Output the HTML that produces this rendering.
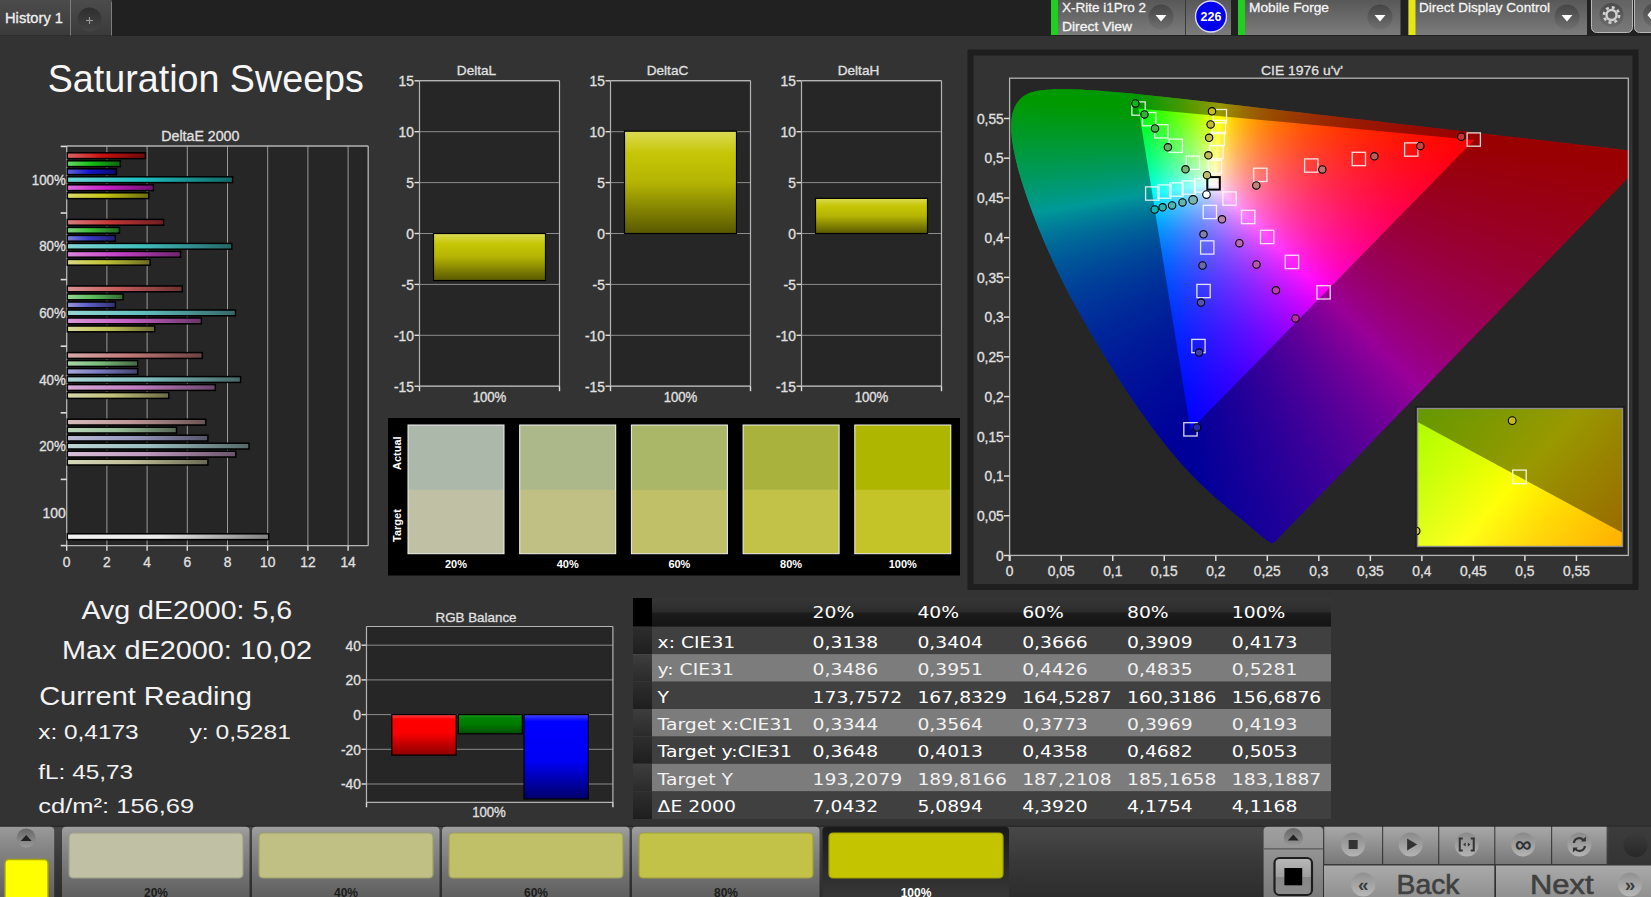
<!DOCTYPE html>
<html><head><meta charset="utf-8"><title>Saturation Sweeps</title>
<style>
html,body{margin:0;padding:0;background:#333;overflow:hidden}
#pg{position:relative;width:1651px;height:897px;background:#333;overflow:hidden;font-family:"Liberation Sans",sans-serif}
#cie{position:absolute;left:1010px;top:79px;width:618px;height:476px;overflow:hidden}
#cie i{display:block;height:2px}
#ins{position:absolute;left:1418px;top:409px;width:204px;height:137px;overflow:hidden}
#ins i{display:block;height:3px}
#ov{position:absolute;left:0;top:0}
text{font-family:"Liberation Sans",sans-serif}
text.tb{font-family:"DejaVu Sans","Liberation Sans",sans-serif}
</style></head><body><div id="pg">
<div id="cie">
<i></i>
<i></i>
<i></i>
<i></i>
<i></i>
<i style="background:linear-gradient(90deg,#0f0 3.9%,#0f0 15.5%)"></i>
<i style="background:linear-gradient(90deg,#0f0 2.8%,#0f0 19.1%)"></i>
<i style="background:linear-gradient(90deg,#0f0 2.1%,#0f0 20.4%,#1cff00 22.3%)"></i>
<i style="background:linear-gradient(90deg,#0f0 1.6%,#0f0 20.4%,#1eff00 22.5%,#4dff00 25.4%)"></i>
<i style="background:linear-gradient(90deg,#00ff01 1.3%,#0f0 20.6%,#3fff00 24.6%,#81ff00 28.3%)"></i>
<i style="background:linear-gradient(90deg,#00ff05 1%,#0f0 6.1%,#0f0 20.6%,#2aff00 23.3%,#57ff00 26.1%,#87ff00 28.6%,#bcff00 31.2%)"></i>
<i style="background:linear-gradient(90deg,#00ff08 0.6%,#0f0 9.5%,#0f0 20.6%,#3f0 23.9%,#72ff00 27.5%,#b5ff00 30.9%,#faff00 34%)"></i>
<i style="background:linear-gradient(90deg,#00ff0c 0.5%,#0f0 12.9%,#01ff00 20.7%,#3bff00 24.4%,#7f0 27.8%,#b9ff00 31.1%,#ff0 34.1%,#ffe200 35.4%,#ffc700 36.9%)"></i>
<i style="background:linear-gradient(90deg,#00ff0f 0.3%,#0f0 16.3%,#0f0 20.7%,#38ff00 24.3%,#74ff00 27.7%,#b5ff00 30.9%,#fffe00 34.1%,#ffe100 35.4%,#ffc900 36.7%,#ffb200 38.2%,#ff9f00 39.6%)"></i>
<i style="background:linear-gradient(90deg,#00ff13 0.2%,#0f0 20.7%,#35ff00 24.1%,#74ff00 27.7%,#b2ff00 30.7%,#fffd00 34.1%,#ffda00 35.8%,#ffb900 37.7%,#ff9a00 40%,#ff8100 42.4%)"></i>
<i style="background:linear-gradient(90deg,#00ff16 0.2%,#01ff03 20.9%,#39ff00 24.4%,#7f0 27.8%,#b9ff00 31.1%,#fdff00 34%,#fffd00 34.1%,#ffe300 35.3%,#ffcd00 36.4%,#ffa800 38.8%,#ff8600 41.7%,#ff6800 45.3%)"></i>
<i style="background:linear-gradient(90deg,#00ff1a 0%,#00ff08 20.9%,#39ff03 24.4%,#7f0 27.8%,#baff00 31.1%,#feff00 34%,#ffdf00 35.4%,#ffc700 36.7%,#ffb000 38.2%,#ff9a00 39.8%,#ff8700 41.6%,#ff7500 43.5%,#f50 48.1%)"></i>
<i style="background:linear-gradient(90deg,#00ff1d 0%,#00ff0c 20.9%,#33ff09 24.1%,#73ff04 27.7%,#b6ff00 30.9%,#ff0 34%,#ffde00 35.4%,#ffc300 36.9%,#ffa800 38.7%,#ff9000 40.6%,#ff7b00 42.7%,#ff6800 45.1%,#f50 47.9%,#ff4600 50.8%)"></i>
<i style="background:linear-gradient(90deg,#00ff21 0%,#01ff11 21%,#3bff0d 24.6%,#76ff09 27.8%,#b7ff04 30.9%,#fffe00 34%,#ffda00 35.6%,#ffba00 37.4%,#ff9f00 39.3%,#ff8500 41.6%,#ff6e00 44.2%,#ff5b00 46.9%,#ff4800 50.2%,#ff3900 53.7%)"></i>
<i style="background:linear-gradient(90deg,#00ff24 0%,#00ff16 21%,#3aff12 24.6%,#76ff0e 27.8%,#b7ff0a 30.9%,#fcff06 33.8%,#fffe05 34%,#ffd302 35.9%,#ffb500 37.7%,#ff9600 40%,#ff7d00 42.4%,#ff6500 45.3%,#ff5000 48.5%,#ff3e00 52.3%,#ff2e00 56.5%)"></i>
<i style="background:linear-gradient(90deg,#00ff28 0%,#00ff1a 21%,#34ff17 24.3%,#73ff14 27.7%,#b7ff10 30.9%,#fdff0c 33.8%,#fffd0b 34%,#ffd207 35.9%,#ffaf03 38%,#ff9000 40.5%,#ff7500 43.2%,#ff5c00 46.4%,#ff4700 50.2%,#ff3500 54.4%,#ff2500 59.2%)"></i>
<i style="background:linear-gradient(90deg,#00ff2b 0%,#01ff1f 21.2%,#39ff1c 24.6%,#76ff19 27.8%,#b7ff15 30.9%,#feff12 33.8%,#ffd10c 35.9%,#ffac08 38.2%,#ff8a03 40.9%,#ff6d00 44%,#f50 47.6%,#ff3f00 51.8%,#ff2c00 56.6%,#ff1c00 62.1%)"></i>
<i style="background:linear-gradient(90deg,#00ff2f 0%,#00ff24 21.2%,#39ff21 24.6%,#76ff1e 27.8%,#b8ff1b 30.9%,#ffff18 33.8%,#ffe414 35%,#ffcd11 36.1%,#ffa60b 38.5%,#ff8407 41.4%,#ff6703 44.7%,#ff4e00 48.5%,#ff3800 53.2%,#ff2600 58.6%,#ff1500 64.9%)"></i>
<i style="background:linear-gradient(90deg,#0f3 0%,#00ff29 21.2%,#35ff27 24.4%,#76ff24 27.8%,#b8ff21 30.9%,#ffff1e 33.8%,#ffe41a 35%,#ffcd16 36.1%,#ffb613 37.4%,#ffa310 38.7%,#ff800a 41.7%,#ff6105 45.5%,#ff4801 49.7%,#ff3200 54.7%,#ff1f00 60.7%,#ff0f00 67.6%)"></i>
<i style="background:linear-gradient(90deg,#00ff36 0%,#01ff2e 21.4%,#3aff2c 24.8%,#75ff2a 27.8%,#b4ff27 30.7%,#fffe24 33.8%,#ffe320 35%,#ffc91b 36.2%,#ffb317 37.5%,#ff9e13 39%,#ff8b10 40.6%,#ff7a0d 42.2%,#ff5c07 46.1%,#ff4103 50.8%,#ff2b00 56.3%,#ff1900 62.8%,#ff0a00 70.6%)"></i>
<i style="background:linear-gradient(90deg,#00ff3a 0%,#0f3 21.4%,#3aff31 24.8%,#75ff2f 27.8%,#b1ff2d 30.6%,#fdff2b 33.7%,#fffd2b 33.8%,#ffe225 35%,#ffc820 36.2%,#ffaf1b 37.7%,#ff9b17 39.2%,#ff8813 40.8%,#ff7610 42.6%,#ff570a 46.8%,#ff3c04 51.8%,#ff2700 57.6%,#ff1400 64.7%,#ff0500 73.3%)"></i>
<i style="background:linear-gradient(90deg,#00ff3e 0%,#00ff38 21.4%,#34ff37 24.4%,#72ff35 27.7%,#adff34 30.4%,#fdff32 33.7%,#fffc31 33.8%,#ffe12b 35%,#ffc725 36.2%,#ffaf20 37.7%,#ff981b 39.3%,#ff8417 41.1%,#ff7113 43%,#ff520c 47.4%,#ff3706 52.8%,#ff2101 59.2%,#ff0f00 67%,#f00 76.2%)"></i>
<i style="background:linear-gradient(90deg,#00ff42 0%,#01ff3d 21.5%,#39ff3c 24.8%,#71ff3b 27.7%,#b5ff3a 30.7%,#feff38 33.7%,#fffb38 33.8%,#ffdd30 35.1%,#ffc32a 36.4%,#ffa924 38%,#ff931f 39.6%,#ff801a 41.4%,#ff6c15 43.5%,#ff5c11 45.8%,#ff4c0d 48.4%,#ff3007 54.4%,#ff1a02 61.8%,#ff0400 73%,#f00 76.1%,#f00 79%)"></i>
<i style="background:linear-gradient(90deg,#00ff45 0%,#00ff42 21.5%,#3bff42 24.9%,#78ff41 28%,#b9ff40 30.9%,#ffff3f 33.7%,#ffdf37 35%,#ffc22f 36.4%,#ffa829 38%,#ff9122 39.8%,#ff7c1d 41.7%,#ff6918 43.9%,#ff5814 46.3%,#ff4810 48.9%,#ff390c 52.1%,#ff2b08 55.7%,#ff1402 64.1%,#f00 75.7%,#f00 81.7%)"></i>
<i style="background:linear-gradient(90deg,#00ff49 0%,#00ff48 21.5%,#35ff47 24.6%,#74ff47 27.8%,#b6ff46 30.7%,#fffe46 33.7%,#ffdb3c 35.1%,#ffbf34 36.6%,#ffa52d 38.2%,#ff8c26 40.1%,#ff7620 42.2%,#ff631a 44.5%,#ff5215 47.1%,#ff4311 49.8%,#ff330d 53.4%,#ff2509 57.4%,#ff0d02 67.2%,#f00 75.4%,#f00 84.6%)"></i>
<i style="background:linear-gradient(90deg,#00ff4d 0%,#01ff4d 21.7%,#3aff4d 24.9%,#74ff4d 27.8%,#b2ff4d 30.6%,#fcff4d 33.5%,#fffd4c 33.7%,#ffda42 35.1%,#ffbe39 36.6%,#ffa231 38.3%,#ff8929 40.3%,#ff7423 42.4%,#ff601d 44.8%,#ff4e18 47.6%,#ff3f13 50.5%,#ff2f0e 54.4%,#ff200a 58.9%,#ff1306 63.9%,#ff0802 69.7%,#f00 75.1%,#f00 87.4%)"></i>
<i style="background:linear-gradient(90deg,#00ff51 0%,#00ff52 21.7%,#3aff53 24.9%,#74ff53 27.8%,#aeff53 30.4%,#fdff54 33.5%,#fffc53 33.7%,#ffd948 35.1%,#ffba3e 36.7%,#ff9e35 38.5%,#ff862d 40.5%,#ff7026 42.7%,#ff5c1f 45.3%,#ff4b1a 48.1%,#ff3a14 51.3%,#ff290f 55.7%,#ff1b0a 60.5%,#ff0e06 66.2%,#ff0303 72.7%,#ff0002 74.9%,#f00 90.1%)"></i>
<i style="background:linear-gradient(90deg,#0f5 0%,#00ff58 21.7%,#33ff59 24.6%,#70ff59 27.7%,#abff5a 30.3%,#d3ff5b 31.9%,#feff5b 33.5%,#fffc5a 33.7%,#ffd84e 35.1%,#ffb943 36.7%,#ff9b39 38.7%,#ff8230 40.8%,#ff6b28 43.2%,#ff5821 45.8%,#ff461b 48.7%,#ff3716 51.9%,#ff2610 56.5%,#ff180b 61.7%,#ff0b07 67.6%,#ff0003 74.4%,#f00 82%,#f00 93%)"></i>
<i style="background:linear-gradient(90deg,#00ff59 0%,#01ff5e 21.8%,#3cff5f 25.1%,#77ff60 28%,#bbff61 30.9%,#ffff62 33.5%,#ffd754 35.1%,#ffb848 36.7%,#ff9a3d 38.7%,#ff8134 40.8%,#ff6a2c 43.2%,#ff5624 46%,#ff441e 49%,#ff3418 52.4%,#ff2412 56.8%,#ff170d 61.8%,#ff0b09 67.5%,#ff0005 74.1%,#f00 85.4%,#f00 95.8%)"></i>
<i style="background:linear-gradient(90deg,#00ff5d 0.2%,#00ff63 21.8%,#3bff65 25.1%,#7f6 28%,#b7ff68 30.7%,#fffe69 33.5%,#ffda5b 35%,#ffb74e 36.7%,#ff9a42 38.7%,#ff7f38 40.9%,#ff682f 43.4%,#ff5327 46.3%,#ff4120 49.5%,#ff3119 53.1%,#ff2214 57.3%,#ff150f 62.1%,#ff0006 73.8%,#f00 88.8%,#f00 98.7%)"></i>
<i style="background:linear-gradient(90deg,#00ff61 0.2%,#00ff69 21.8%,#34ff6b 24.8%,#73ff6d 27.8%,#b3ff6f 30.6%,#fffe70 33.5%,#ffd961 35%,#ffb653 36.7%,#ff9947 38.7%,#ff7e3c 40.9%,#ff6632 43.5%,#ff5129 46.4%,#ff3f22 49.7%,#ff2f1b 53.4%,#ff2116 57.4%,#ff1511 62.1%,#ff0008 73.5%,#f00 92.2%,#f00 100%)"></i>
<i style="background:linear-gradient(90deg,#00ff65 0.2%,#00ff6f 21.8%,#0aff6f 22.5%,#30ff71 24.6%,#6fff73 27.7%,#abff75 30.3%,#d5ff77 31.9%,#fdff79 33.3%,#fffd78 33.5%,#ffd868 35%,#ffb559 36.7%,#ff984c 38.7%,#ff7d40 40.9%,#ff6536 43.5%,#ff502d 46.4%,#ff3e25 49.7%,#ff2e1e 53.4%,#ff2118 57.4%,#ff1413 62.1%,#ff000a 73.1%,#ff0002 88.8%,#f00 100%)"></i>
<i style="background:linear-gradient(90deg,#00ff69 0.3%,#00ff75 22%,#39ff77 25.1%,#73ff7a 27.8%,#acff7d 30.3%,#d5ff7e 31.9%,#feff80 33.3%,#fffc7f 33.5%,#ffd76e 35%,#ffb45e 36.7%,#ff9751 38.7%,#ff7c44 40.9%,#ff6439 43.5%,#ff5030 46.4%,#ff3e28 49.7%,#ff2e20 53.4%,#ff201a 57.4%,#ff1415 62%,#ff000c 72.8%,#f00 100%)"></i>
<i style="background:linear-gradient(90deg,#00ff6d 0.3%,#00ff7b 22%,#32ff7d 24.8%,#6fff81 27.7%,#b4ff84 30.6%,#feff88 33.3%,#fffb86 33.5%,#ffd674 35%,#ffb364 36.7%,#ff9655 38.7%,#ff7b49 40.9%,#ff633d 43.5%,#ff4f33 46.4%,#ff3d2b 49.7%,#ff2d23 53.4%,#ff1417 61.8%,#ff000d 72.5%,#ff0001 100%)"></i>
<i style="background:linear-gradient(90deg,#00ff71 0.5%,#00ff81 22%,#0aff82 22.7%,#32ff84 24.8%,#72ff88 27.8%,#b4ff8c 30.6%,#ffff90 33.3%,#ffd97d 34.8%,#ffb56b 36.6%,#ff975b 38.5%,#ff7c4e 40.8%,#ff6442 43.4%,#ff4f37 46.3%,#ff3d2e 49.5%,#ff2d26 53.2%,#ff201f 57.1%,#ff1419 61.7%,#ff000f 72.2%,#ff0002 100%)"></i>
<i style="background:linear-gradient(90deg,#00ff76 0.5%,#00ff7e 12.3%,#01ff87 22.2%,#3bff8b 25.2%,#76ff8f 28%,#b4ff93 30.6%,#fffe97 33.3%,#ffd883 34.8%,#ffb470 36.6%,#ff9660 38.5%,#ff7b52 40.8%,#ff6345 43.4%,#ff4e3a 46.3%,#ff3c31 49.5%,#ff2c28 53.2%,#ff141b 61.5%,#f01 71.8%,#ff0009 84.3%,#ff0003 100%)"></i>
<i style="background:linear-gradient(90deg,#00ff7a 0.6%,#00ff83 12.3%,#00ff8d 22.2%,#37ff91 25.1%,#72ff96 27.8%,#b1ff9a 30.4%,#fcffa0 33.2%,#fffd9f 33.3%,#ffd78a 34.8%,#ffb376 36.6%,#ff9565 38.5%,#ff7a56 40.8%,#ff6249 43.4%,#ff4d3e 46.3%,#ff3c34 49.5%,#ff2c2b 53.2%,#ff131d 61.3%,#ff0013 71.5%,#ff000a 84.1%,#ff0004 100%)"></i>
<i style="background:linear-gradient(90deg,#00ff7e 0.6%,#0f8 12.5%,#00ff94 22.2%,#0aff95 22.8%,#30ff98 24.8%,#6eff9d 27.7%,#a8ffa1 30.1%,#d3ffa5 31.7%,#fdffa8 33.2%,#fffca7 33.3%,#ffd691 34.8%,#ffb27c 36.6%,#ff946a 38.5%,#ff795b 40.8%,#ff634e 43.2%,#ff4e41 46.1%,#ff3c37 49.4%,#ff2c2e 53.1%,#ff1320 61.2%,#ff0014 71.4%,#ff000c 84%,#ff0005 100%)"></i>
<i style="background:linear-gradient(90deg,#00ff83 0.8%,#00ff8e 12.6%,#01ff9a 22.3%,#39ff9f 25.2%,#71ffa4 27.8%,#b5ffaa 30.6%,#feffb1 33.2%,#fffbae 33.3%,#ffd597 34.8%,#ffb182 36.6%,#ff9370 38.5%,#ff785f 40.8%,#ff6252 43.2%,#ff4d45 46.1%,#ff3b3a 49.4%,#ff2b30 53.1%,#ff1322 61%,#ff0016 71%,#ff000d 83.8%,#ff0006 100%)"></i>
<i style="background:linear-gradient(90deg,#00ff87 0.8%,#00ff93 12.6%,#00ffa1 22.3%,#38ffa6 25.2%,#75ffac 28%,#b6ffb2 30.6%,#ffffb9 33.2%,#ffd8a1 34.6%,#ffb389 36.4%,#ff9576 38.3%,#ff7965 40.6%,#ff6256 43%,#ff4d49 46%,#ff3b3d 49.2%,#ff2b33 52.9%,#ff1324 60.8%,#ff0018 70.7%,#ff000e 83.7%,#ff0007 100%)"></i>
<i style="background:linear-gradient(90deg,#00ff8c 1%,#00ff98 12.6%,#00ffa8 22.3%,#31ffad 24.9%,#71ffb3 27.8%,#b1ffba 30.4%,#fffec1 33.2%,#ffd7a8 34.6%,#ffb28f 36.4%,#ff947b 38.3%,#ff7a6a 40.5%,#ff635b 42.9%,#ff4d4d 45.8%,#ff3a40 49.2%,#ff2a36 52.9%,#ff1326 60.7%,#ff001a 70.4%,#ff0010 83.5%,#ff0008 100%)"></i>
<i style="background:linear-gradient(90deg,#00ff90 1%,#00ff9e 12.8%,#01ffaf 22.5%,#3affb5 25.4%,#74ffbb 28%,#b2ffc2 30.4%,#fcffca 33%,#fffdc9 33.2%,#ffd6af 34.6%,#ffb195 36.4%,#ff9380 38.3%,#ff796f 40.5%,#ff625f 42.9%,#ff4c50 45.8%,#ff3943 49.2%,#ff2938 52.9%,#ff1229 60.5%,#ff001c 70.1%,#f01 83.2%,#ff0009 100%)"></i>
<i style="background:linear-gradient(90deg,#00ff95 1.1%,#00ffa4 12.8%,#00ffb5 22.5%,#36ffbc 25.2%,#74ffc3 28%,#aeffca 30.3%,#fdffd3 33%,#fffcd1 33.2%,#ffd5b6 34.6%,#ffb09c 36.4%,#ff9286 38.3%,#ff7873 40.5%,#ff6163 42.9%,#ff4c54 45.8%,#ff3946 49.2%,#ff293b 52.9%,#ff122b 60.4%,#ff001e 69.7%,#ff0013 83%,#ff000a 100%)"></i>
<i style="background:linear-gradient(90deg,#0f9 1.1%,#00ffa9 12.8%,#00ffbc 22.5%,#2fffc2 24.9%,#70ffca 27.8%,#b7ffd3 30.6%,#feffdc 33%,#fffbda 33.2%,#ffd4bd 34.6%,#ffafa2 36.4%,#ff918b 38.3%,#ff7778 40.5%,#ff6067 42.9%,#ff4b57 45.8%,#ff3849 49.2%,#ff283e 52.9%,#ff122d 60.4%,#ff0020 69.4%,#ff0014 82.8%,#ff000b 100%)"></i>
<i style="background:linear-gradient(90deg,#00ff9e 1.3%,#00ffaf 12.9%,#01ffc4 22.7%,#3cffcc 25.6%,#78ffd4 28.2%,#b7ffdc 30.6%,#ffffe6 33%,#ffd7c7 34.5%,#ffb1aa 36.2%,#ff9292 38.2%,#ff787e 40.3%,#ff606c 42.7%,#ff4b5c 45.6%,#ff394e 48.9%,#ff2841 52.6%,#ff1230 59.9%,#f02 69.1%,#ff0016 82.5%,#ff000c 100%)"></i>
<i style="background:linear-gradient(90deg,#00ffa3 1.5%,#00ffb5 13.1%,#00ffcb 22.7%,#38ffd3 25.4%,#78ffdc 28.2%,#b7ffe5 30.6%,#fffeee 33%,#ffd6ce 34.5%,#ffb0b0 36.2%,#ff9198 38.2%,#ff7783 40.3%,#ff6070 42.7%,#ff4a5f 45.6%,#ff3851 48.9%,#ff2844 52.6%,#ff1232 59.9%,#ff0024 68.8%,#ff0017 82.4%,#ff000d 100%)"></i>
<i style="background:linear-gradient(90deg,#00ffa8 1.5%,#0fb 13.1%,#00ffd2 22.7%,#34ffda 25.2%,#73ffe3 28%,#b3ffed 30.4%,#fbfff8 32.8%,#fffdf7 33%,#ffd5d6 34.5%,#ffafb7 36.2%,#ff909d 38.2%,#ff7688 40.3%,#ff5f74 42.7%,#ff4963 45.6%,#ff3754 48.9%,#ff2747 52.6%,#ff1135 59.7%,#ff0026 68.4%,#ff0019 82%,#ff000e 99.8%)"></i>
<i style="background:linear-gradient(90deg,#00ffad 1.6%,#00ffc1 13.3%,#01ffda 22.8%,#33ffe2 25.2%,#6bffeb 27.7%,#a6fff4 29.9%,#e8fffe 32.2%,#fefcff 33%,#fff7fc 33.2%,#ffd0da 34.6%,#ffabbb 36.4%,#ff8da1 38.3%,#ff738b 40.5%,#ff5c77 42.9%,#ff4765 45.8%,#ff3656 49%,#ff2649 52.8%,#ff1137 59.7%,#ff0029 68.1%,#ff001a 81.7%,#ff000f 99.5%)"></i>
<i style="background:linear-gradient(90deg,#00ffb2 1.6%,#00ffc7 13.3%,#00ffe1 22.8%,#28ffe8 24.8%,#53ffef 26.7%,#83fff7 28.6%,#b3ffff 30.4%,#fef1ff 33.3%,#ffedfc 33.5%,#ffc7db 35%,#ffa4bc 36.7%,#ff87a2 38.7%,#ff6f8d 40.8%,#ff5979 43.2%,#ff4567 46.1%,#ff3257 49.5%,#ff234a 53.2%,#ff1039 59.9%,#ff002b 67.8%,#ff001c 81.6%,#ff0010 99.4%)"></i>
<i style="background:linear-gradient(90deg,#00ffb7 1.8%,#00ffcd 13.3%,#00ffe9 22.8%,#12ffec 23.8%,#39fff3 25.6%,#7fffff 28.5%,#fee6ff 33.7%,#ffe2fc 33.8%,#ffbfdc 35.3%,#ff9ebd 37.1%,#ff82a4 39%,#ff698d 41.3%,#ff547a 43.7%,#ff4168 46.6%,#ff3059 49.8%,#ff214c 53.6%,#ff0f3b 59.9%,#ff002d 67.5%,#ff001d 81.2%,#f01 99%)"></i>
<i style="background:linear-gradient(90deg,#00ffbc 1.9%,#00ffd4 13.4%,#01fff1 23%,#26fff8 24.8%,#4effff 26.5%,#a4eeff 30.3%,#fedcff 34%,#ffd9fc 34.1%,#ffb7dc 35.6%,#ff98be 37.4%,#ff7da5 39.3%,#ff658f 41.6%,#ff507a 44.2%,#ff3d69 47.1%,#ff2d5a 50.3%,#ff1f4d 54%,#ff0e3d 60%,#ff002f 67.2%,#ff001f 80.7%,#ff0012 98.7%)"></i>
<i style="background:linear-gradient(90deg,#00ffc1 1.9%,#00ffda 13.4%,#00ffe9 18.4%,#00fff9 23%,#2ff 24.6%,#90e9ff 29.6%,#fed3ff 34.3%,#ffd0fc 34.5%,#ffadda 36.1%,#ff8fbd 37.9%,#ff76a5 39.8%,#ff608f 42.1%,#ff4b7b 44.7%,#ff3a6a 47.6%,#ff2a5b 50.8%,#ff1d4e 54.5%,#ff0d3e 60.2%,#ff0032 66.8%,#ff0021 80.4%,#ff0014 98.4%)"></i>
<i style="background:linear-gradient(90deg,#00ffc6 2.1%,#00ffdf 12.8%,#0fe 17.8%,#0ff 22.5%,#00fdff 23%,#23f6ff 24.8%,#68e8ff 28%,#b3d9ff 31.4%,#fecaff 34.6%,#ffc7fc 34.8%,#ffa6db 36.4%,#ff8abf 38.2%,#ff72a6 40.1%,#ff5c90 42.4%,#ff487d 45%,#ff376b 47.9%,#ff285c 51.3%,#ff1b4f 55%,#ff0c40 60.4%,#ff0034 66.5%,#f02 80.1%,#ff0015 98.1%)"></i>
<i style="background:linear-gradient(90deg,#0fc 2.3%,#00ffe3 12.1%,#0ff 20.6%,#01f5ff 23.1%,#6edfff 28.5%,#b5d0ff 31.7%,#fec1ff 35%,#ffbefc 35.1%,#ff9fdc 36.7%,#ff84c0 38.5%,#ff6da8 40.5%,#ff5892 42.7%,#ff457e 45.3%,#ff356d 48.2%,#ff265d 51.6%,#ff1950 55.3%,#ff0b42 60.5%,#ff0036 66.3%,#ff0024 79.9%,#ff0016 97.7%)"></i>
<i style="background:linear-gradient(90deg,#00ffd1 2.3%,#00ffe6 11%,#0ff 18.6%,#0ef 23.1%,#6ed7ff 28.6%,#b6c8ff 32%,#feb9ff 35.3%,#ffb6fc 35.4%,#ff99dc 37.1%,#ff7fc1 38.8%,#ff67a7 40.9%,#ff5392 43.2%,#ff417f 45.8%,#ff326e 48.7%,#ff235e 52.1%,#ff1751 55.8%,#ff0b44 60.5%,#ff0039 66%,#ff0026 79.6%,#ff0017 97.4%)"></i>
<i style="background:linear-gradient(90deg,#00ffd7 2.4%,#00ffe9 10%,#0ff 16.7%,#00e7ff 23.1%,#67d1ff 28.5%,#b1c1ff 32%,#feb1ff 35.6%,#ffaffc 35.8%,#ff92dd 37.4%,#ff7ac2 39.2%,#ff63a9 41.3%,#ff5093 43.5%,#ff3f80 46.1%,#ff2e6f 49.2%,#ff215f 52.6%,#ff1552 56.3%,#ff003b 65.7%,#ff0027 79.3%,#ff0018 97.1%)"></i>
<i style="background:linear-gradient(90deg,#00ffdc 2.6%,#00ffed 9.1%,#0ff 14.7%,#01dfff 23.3%,#6ec8ff 29%,#b6b9ff 32.5%,#feaaff 35.9%,#ffa7fc 36.1%,#ff8fe0 37.5%,#ff77c5 39.3%,#ff64af 41.1%,#ff519a 43.2%,#ff4288 45.5%,#ff3378 48.1%,#ff1b5c 54%,#ff0c4c 59.2%,#ff003e 65.4%,#ff0029 79%,#ff001a 96.8%)"></i>
<i style="background:linear-gradient(90deg,#00ffe2 2.8%,#0ff 12.9%,#00d9ff 23.3%,#70c1ff 29.3%,#b7b2ff 32.8%,#fea3ff 36.2%,#ffa0fc 36.4%,#ff89e1 37.9%,#ff74c8 39.5%,#ff61b2 41.3%,#ff4f9d 43.4%,#ff408b 45.6%,#ff317a 48.2%,#ff256b 51.1%,#ff1a5e 54.2%,#ff0c4e 59.2%,#ff0040 65%,#ff002b 78.5%,#ff001b 96.4%)"></i>
<i style="background:linear-gradient(90deg,#00ffe8 2.8%,#0ff 11%,#00d3ff 23.3%,#6abcff 29.1%,#b2acff 32.8%,#fe9cff 36.6%,#ff99fd 36.7%,#ff83e2 38.2%,#ff6dc7 40%,#ff5cb2 41.7%,#ff4b9d 43.9%,#ff3c8b 46.1%,#ff2e7b 48.7%,#ff1860 54.5%,#ff0b50 59.2%,#ff0043 64.7%,#ff0037 71%,#ff002d 78.2%,#ff001c 96.1%)"></i>
<i style="background:linear-gradient(90deg,#00ffed 2.9%,#0ff 9.1%,#01ccff 23.5%,#70b4ff 29.6%,#b7a5ff 33.3%,#fe95ff 36.9%,#ff93fd 37.1%,#ff7ee2 38.5%,#ff69c8 40.3%,#ff58b3 42.1%,#ff479e 44.2%,#ff398d 46.4%,#ff2c7c 49%,#ff1661 54.9%,#ff0a52 59.4%,#ff0045 64.4%,#ff0039 70.7%,#ff002f 77.8%,#ff001e 95.8%)"></i>
<i style="background:linear-gradient(90deg,#00fff3 3.1%,#0ff 7.1%,#00c7ff 23.5%,#70aeff 29.8%,#b59fff 33.5%,#fe8fff 37.2%,#ff8dfd 37.4%,#ff78e3 38.8%,#ff64c9 40.6%,#ff54b4 42.4%,#ff44a0 44.5%,#ff368e 46.8%,#ff2a7e 49.4%,#ff1562 55.2%,#ff0954 59.4%,#ff0048 64.1%,#ff003b 70.4%,#ff0031 77.5%,#ff001f 95.5%)"></i>
<i style="background:linear-gradient(90deg,#00fff9 3.1%,#0ff 5.2%,#00e1ff 14.6%,#00c1ff 23.5%,#6ca9ff 29.8%,#b499ff 33.7%,#fe89ff 37.5%,#ff87fd 37.7%,#ff73e3 39.2%,#ff60ca 40.9%,#ff50b5 42.7%,#ff41a1 44.8%,#ff348f 47.1%,#ff2880 49.5%,#ff1364 55.3%,#ff0957 59.2%,#ff004b 63.8%,#ff003e 70.1%,#f03 77.2%,#ff0020 95.1%)"></i>
<i style="background:linear-gradient(90deg,#0ff 3.2%,#00deff 13.6%,#00bcff 23.5%,#1cb6ff 25.2%,#66a5ff 29.6%,#b294ff 33.8%,#fe83ff 37.9%,#ff81fd 38%,#ff6ee4 39.5%,#ff5ccb 41.3%,#ff4db6 43%,#ff3ea2 45.1%,#ff3191 47.4%,#ff2681 49.8%,#ff1266 55.7%,#ff004e 63.4%,#ff0040 69.6%,#ff0034 76.9%,#f02 94.8%)"></i>
<i style="background:linear-gradient(90deg,#00f9ff 3.4%,#00d8ff 13.8%,#00b7ff 23.6%,#729dff 30.4%,#b68dff 34.3%,#fe7dff 38.2%,#ff7bfd 38.3%,#ff68e2 40%,#ff58cb 41.6%,#ff49b7 43.4%,#ff3ba3 45.5%,#ff2f92 47.7%,#ff2483 50.2%,#ff1067 56%,#ff0050 63.1%,#ff003e 71.5%,#ff002f 81.9%,#ff0023 94.5%)"></i>
<i style="background:linear-gradient(90deg,#00f3ff 3.6%,#00d3ff 13.9%,#00b2ff 23.6%,#6e98ff 30.4%,#b588ff 34.5%,#fe78ff 38.5%,#ff76fd 38.7%,#ff63e2 40.3%,#ff54cc 41.9%,#ff46b8 43.7%,#ff38a4 45.8%,#ff2c93 48.1%,#ff2284 50.5%,#ff0f69 56.1%,#ff0053 62.8%,#ff0040 71.5%,#ff0031 81.7%,#ff0024 94.2%)"></i>
<i style="background:linear-gradient(90deg,#00edff 3.7%,#00ceff 13.9%,#00adff 23.6%,#22a5ff 25.9%,#6995ff 30.3%,#b384ff 34.6%,#fe72ff 38.8%,#ff71fd 39%,#ff5fe3 40.6%,#ff50cd 42.2%,#ff43b9 44%,#ff36a6 46.1%,#ff2a94 48.4%,#ff2085 50.8%,#ff0d6a 56.5%,#ff0056 62.5%,#ff0041 71.7%,#ff0032 81.7%,#ff0026 94%)"></i>
<i style="background:linear-gradient(90deg,#00e8ff 3.7%,#00c8ff 14.1%,#00a8ff 23.8%,#738dff 31.1%,#b77eff 35.1%,#fe6dff 39.2%,#ff6cfd 39.3%,#ff5be3 40.9%,#ff4dce 42.6%,#ff40ba 44.3%,#ff33a7 46.4%,#ff2895 48.7%,#ff1e86 51.1%,#ff0c6b 56.8%,#ff0059 62.1%,#ff0043 71.8%,#ff0034 81.7%,#ff0027 93.7%)"></i>
<i style="background:linear-gradient(90deg,#00e2ff 3.9%,#00c4ff 14.1%,#00a4ff 23.8%,#7089ff 31.1%,#b679ff 35.3%,#fe68ff 39.5%,#ff67fd 39.6%,#ff57e4 41.3%,#ff49ce 42.9%,#ff3dbb 44.7%,#ff30a8 46.8%,#ff1c87 51.5%,#ff0b6d 57%,#ff005c 61.8%,#ff0045 71.8%,#ff0035 81.6%,#ff0028 93.4%)"></i>
<i style="background:linear-gradient(90deg,#0df 4%,#00a0ff 23.8%,#2597ff 26.4%,#6b86ff 30.9%,#b475ff 35.4%,#fe64ff 39.8%,#ff62fd 40%,#ff53e4 41.6%,#ff46cf 43.2%,#ff3abc 45%,#ff2ea9 47.1%,#ff1a89 51.8%,#ff096e 57.3%,#ff0060 61.5%,#ff0052 66.5%,#ff0046 72%,#ff0037 81.6%,#ff002a 93%)"></i>
<i style="background:linear-gradient(90deg,#00d8ff 4.2%,#009bff 23.9%,#7280ff 31.6%,#b870ff 35.9%,#fe5fff 40.1%,#ff5efd 40.3%,#ff4fe4 41.9%,#ff42d0 43.5%,#ff37bd 45.3%,#ff2baa 47.4%,#ff188b 51.9%,#ff0870 57.4%,#ff0063 61.2%,#ff0054 66.2%,#ff0048 72%,#ff0038 81.4%,#ff002b 92.7%)"></i>
<i style="background:linear-gradient(90deg,#00d4ff 4.2%,#0097ff 23.9%,#727cff 31.7%,#b76cff 36.1%,#fe5bff 40.5%,#ff59fd 40.6%,#ff4be5 42.2%,#ff3fd0 43.9%,#ff34bd 45.6%,#ff29ab 47.7%,#ff168c 52.3%,#ff0771 57.8%,#f06 60.8%,#ff0057 66%,#ff0049 72%,#ff003a 81.2%,#ff002d 92.4%)"></i>
<i style="background:linear-gradient(90deg,#00cfff 4.4%,#0093ff 23.9%,#2889ff 26.9%,#6d79ff 31.6%,#b568ff 36.2%,#fe56ff 40.8%,#ff55fd 40.9%,#ff47e5 42.6%,#ff3cd1 44.2%,#ff31be 46%,#ff27ad 47.9%,#ff158e 52.4%,#ff0673 57.9%,#ff0069 60.5%,#ff0059 65.9%,#ff004b 72%,#ff003b 81.2%,#ff002e 92.1%)"></i>
<i style="background:linear-gradient(90deg,#00caff 4.5%,#008fff 24.1%,#7473ff 32.2%,#b963ff 36.7%,#fe52ff 41.1%,#ff51fd 41.3%,#ff44e6 42.9%,#ff39d2 44.5%,#ff2ebf 46.3%,#ff24ad 48.4%,#ff138e 52.9%,#ff0474 58.3%,#ff006c 60.4%,#ff005b 65.9%,#ff004c 72.2%,#ff003d 81.1%,#ff0030 91.7%)"></i>
<i style="background:linear-gradient(90deg,#00c6ff 4.7%,#008cff 24.1%,#7170ff 32.2%,#b75fff 36.9%,#fe4eff 41.4%,#ff4dfd 41.6%,#ff40e6 43.2%,#ff36d2 44.8%,#ff22af 48.5%,#ff1190 53.1%,#ff0376 58.4%,#ff0070 59.9%,#ff0060 64.7%,#ff004e 72.2%,#ff003f 80.9%,#ff0031 91.4%)"></i>
<i style="background:linear-gradient(90deg,#00c1ff 4.9%,#08f 24.1%,#2b7eff 27.3%,#6f6dff 32.2%,#b65cff 37.1%,#fe4aff 41.7%,#ff49fd 41.9%,#ff3de6 43.5%,#ff33d3 45.1%,#ff20b0 48.9%,#ff1091 53.4%,#ff0278 58.6%,#ff0073 59.7%,#ff0062 64.9%,#ff0050 72.2%,#ff0040 80.9%,#f03 91.1%)"></i>
<i style="background:linear-gradient(90deg,#00bdff 5%,#0184ff 24.3%,#7568ff 32.8%,#fe47ff 42.1%,#ff46fd 42.2%,#ff3ae7 43.9%,#ff30d3 45.5%,#ff1eb1 49.2%,#ff0e92 53.7%,#ff0179 58.9%,#ff0063 65%,#ff0051 72.3%,#ff0042 80.7%,#ff0034 90.8%)"></i>
<i style="background:linear-gradient(90deg,#00b9ff 5%,#0081ff 24.3%,#7365ff 32.8%,#b854ff 37.7%,#fe43ff 42.4%,#ff42fd 42.6%,#ff37e7 44.2%,#ff2dd4 45.8%,#ff1cb1 49.5%,#ff0d94 53.9%,#ff007b 59.1%,#ff0065 65.2%,#ff0053 72.3%,#ff0043 80.7%,#ff0036 90.5%)"></i>
<i style="background:linear-gradient(90deg,#00b5ff 5.2%,#007eff 24.3%,#2d73ff 27.8%,#7062ff 32.8%,#ff3ffe 42.9%,#ff34e7 44.5%,#ff2ad5 46.1%,#ff19b2 49.8%,#ff0b95 54.2%,#ff007c 59.2%,#ff0067 65.2%,#f05 72.2%,#ff0045 80.4%,#ff0037 90.1%)"></i>
<i style="background:linear-gradient(90deg,#00b1ff 5.3%,#017bff 24.4%,#755eff 33.3%,#ff3bfe 43.2%,#ff31e8 44.8%,#ff28d5 46.4%,#ff17b3 50.2%,#ff0996 54.5%,#ff0083 58.3%,#ff007d 59.5%,#ff0068 65.4%,#ff0056 72.3%,#ff0046 80.4%,#ff0039 89.8%)"></i>
<i style="background:linear-gradient(90deg,#00adff 5.5%,#0078ff 24.4%,#745bff 33.5%,#ff38fe 43.5%,#ff26d7 46.6%,#ff16b5 50.3%,#ff0898 54.7%,#ff0087 57.9%,#ff007f 59.7%,#ff006a 65.5%,#ff0058 72.3%,#ff0048 80.3%,#ff003b 89.5%)"></i>
<i style="background:linear-gradient(90deg,#0af 5.7%,#0075ff 24.4%,#7059ff 33.3%,#ff35fe 43.9%,#ff23d8 46.9%,#ff14b6 50.6%,#ff0a9f 53.9%,#ff008b 57.6%,#ff0081 59.9%,#ff006b 65.7%,#ff0059 72.3%,#ff004a 80.1%,#ff003c 89.2%)"></i>
<i style="background:linear-gradient(90deg,#00a6ff 5.8%,#0172ff 24.6%,#7654ff 34%,#ff31fe 44.2%,#ff21d8 47.2%,#ff12b7 51%,#ff09a2 53.9%,#ff008f 57.3%,#ff0082 60%,#ff006d 65.7%,#ff005b 72.3%,#ff004c 79.9%,#ff003e 88.8%)"></i>
<i style="background:linear-gradient(90deg,#00a2ff 6%,#006fff 24.6%,#7651ff 34.1%,#ff2efe 44.5%,#ff1ed9 47.6%,#ff10b7 51.3%,#ff08a4 54%,#ff0093 57%,#ff0083 60.4%,#ff006e 66%,#ff005c 72.5%,#ff004d 79.9%,#ff003f 88.7%)"></i>
<i style="background:linear-gradient(90deg,#009fff 6.1%,#006cff 24.6%,#7150ff 34%,#ff2bfe 44.8%,#ff1cd9 47.9%,#ff0eb8 51.6%,#ff0098 56.6%,#ff0085 60.5%,#ff0070 66%,#ff005e 72.5%,#ff004f 79.8%,#ff0041 88.3%)"></i>
<i style="background:linear-gradient(90deg,#009bff 6.3%,#0169ff 24.8%,#774bff 34.6%,#ff29fe 45.1%,#ff1ada 48.2%,#ff0dba 51.8%,#ff009b 56.5%,#ff0087 60.7%,#ff0072 66.2%,#ff0060 72.5%,#ff0050 79.8%,#ff0043 88%)"></i>
<i style="background:linear-gradient(90deg,#09f 6.3%,#0067ff 24.8%,#7749ff 34.8%,#ff26fe 45.5%,#ff17da 48.5%,#ff0bbb 52.1%,#ff00a0 56.1%,#f08 60.8%,#ff0074 66.2%,#ff0062 72.5%,#ff0052 79.6%,#ff0045 87.7%)"></i>
<i style="background:linear-gradient(90deg,#0095ff 6.5%,#0065ff 24.8%,#7347ff 34.6%,#ff23fe 45.8%,#ff15db 48.9%,#ff09bc 52.4%,#ff00a5 55.8%,#ff008a 61%,#ff0075 66.3%,#ff0064 72.3%,#ff0054 79.3%,#ff0046 87.4%)"></i>
<i style="background:linear-gradient(90deg,#0092ff 6.6%,#0162ff 24.9%,#7644ff 35.1%,#ff20fe 46.1%,#ff13db 49.2%,#ff08bd 52.6%,#ff00a9 55.5%,#ff008b 61.2%,#f07 66.3%,#ff0065 72.3%,#ff0056 79.1%,#ff0048 87.1%)"></i>
<i style="background:linear-gradient(90deg,#008fff 6.8%,#005fff 24.9%,#7641ff 35.3%,#ff1efe 46.4%,#ff11db 49.5%,#ff06be 52.9%,#ff00ae 55.2%,#ff009d 58.1%,#ff008d 61.3%,#ff0079 66.5%,#ff0067 72.3%,#ff0057 79.1%,#ff004a 86.7%)"></i>
<i style="background:linear-gradient(90deg,#008cff 7%,#005dff 24.9%,#743fff 35.3%,#ff1bfe 46.8%,#ff0fdc 49.8%,#ff04bf 53.2%,#ff00b3 54.9%,#ff00a0 57.9%,#ff008f 61.5%,#ff007b 66.5%,#ff0069 72.3%,#ff0059 79%,#ff004c 86.4%)"></i>
<i style="background:linear-gradient(90deg,#0089ff 7.1%,#015bff 25.1%,#773cff 35.8%,#ff19fe 47.1%,#ff0dde 50%,#ff03c1 53.4%,#ff00b8 54.5%,#ff00a7 57.3%,#ff0090 61.7%,#ff007c 66.7%,#ff006b 72.3%,#ff005b 78.8%,#ff004e 86.1%)"></i>
<i style="background:linear-gradient(90deg,#0086ff 7.3%,#0059ff 25.1%,#773aff 35.9%,#ff16fe 47.4%,#ff0bde 50.3%,#ff01c1 53.7%,#ff00a8 57.4%,#ff0092 61.8%,#ff007e 66.7%,#ff006c 72.3%,#ff005d 78.6%,#ff004f 85.8%)"></i>
<i style="background:linear-gradient(90deg,#0083ff 7.4%,#0057ff 25.1%,#7538ff 35.9%,#ff14fe 47.7%,#ff09de 50.6%,#ff00c2 54%,#ff00a9 57.8%,#ff0093 62%,#ff0080 66.8%,#ff006e 72.3%,#ff005f 78.5%,#ff0051 85.4%)"></i>
<i style="background:linear-gradient(90deg,#0081ff 7.6%,#0154ff 25.2%,#7835ff 36.4%,#ff12fe 48.1%,#ff07df 51%,#ff00c3 54.2%,#ff00ab 57.9%,#ff0095 62.1%,#ff0082 66.8%,#ff0070 72.2%,#ff0061 78.3%,#ff0053 85.1%)"></i>
<i style="background:linear-gradient(90deg,#007eff 7.8%,#0052ff 25.2%,#7833ff 36.6%,#ff10fe 48.4%,#ff06df 51.3%,#ff00ce 53.2%,#ff00c4 54.5%,#ff00ab 58.3%,#ff0096 62.3%,#ff0083 67%,#ff0072 72.2%,#ff0063 78.2%,#f05 84.8%)"></i>
<i style="background:linear-gradient(90deg,#007bff 7.9%,#0050ff 25.2%,#7631ff 36.6%,#ff0dfe 48.7%,#ff07e9 50.6%,#ff00d4 52.9%,#ff00c5 54.9%,#ff00ad 58.4%,#ff0098 62.5%,#ff0085 67%,#ff0074 72.2%,#ff0065 78%,#ff0057 84.5%)"></i>
<i style="background:linear-gradient(90deg,#0079ff 8.1%,#014eff 25.4%,#782fff 36.9%,#ff0bfe 49%,#ff00da 52.6%,#ff00c6 55%,#ff00af 58.6%,#f09 62.6%,#ff0086 67.2%,#ff0076 72.2%,#f06 77.8%,#ff0059 84.1%)"></i>
<i style="background:linear-gradient(90deg,#0076ff 8.3%,#004cff 25.4%,#772dff 37.1%,#ff09fe 49.4%,#ff00e0 52.3%,#ff00c7 55.3%,#ff00af 58.9%,#ff009b 62.8%,#f08 67.2%,#f07 72.2%,#ff0068 77.7%,#ff005b 83.8%)"></i>
<i style="background:linear-gradient(90deg,#0074ff 8.4%,#004aff 25.4%,#752cff 37.1%,#ff07fe 49.7%,#ff00e6 51.9%,#ff00c7 55.7%,#ff00b1 59.1%,#ff009c 62.9%,#ff008a 67.3%,#ff0079 72.2%,#ff006a 77.5%,#ff005d 83.5%)"></i>
<i style="background:linear-gradient(90deg,#0071ff 8.6%,#0148ff 25.6%,#7829ff 37.5%,#ff05fe 50%,#ff00eb 51.8%,#ff00c9 55.8%,#ff00b3 59.2%,#ff009e 63.1%,#ff008c 67.3%,#ff007b 72.2%,#ff005f 83.3%)"></i>
<i style="background:linear-gradient(90deg,#006fff 8.7%,#0047ff 25.6%,#7827ff 37.7%,#ff03fe 50.3%,#ff00f2 51.5%,#ff00e3 53.1%,#ff00ca 56.1%,#ff00b3 59.5%,#ff009f 63.3%,#ff008d 67.5%,#ff007d 72.2%,#ff0061 83%)"></i>
<i style="background:linear-gradient(90deg,#006cff 8.9%,#0045ff 25.6%,#7626ff 37.7%,#ff01fe 50.6%,#ff00e3 53.4%,#ff00cb 56.3%,#ff00b5 59.7%,#ff00a1 63.4%,#ff008f 67.5%,#ff007f 72%,#ff0063 82.7%)"></i>
<i style="background:linear-gradient(90deg,#006aff 9.1%,#0143ff 25.7%,#7923ff 38.2%,#ff00fe 51%,#ff00e3 53.7%,#f0c 56.6%,#ff00b6 59.9%,#ff00a2 63.6%,#ff0090 67.6%,#ff0081 72%,#ff0065 82.4%)"></i>
<i style="background:linear-gradient(90deg,#0068ff 9.2%,#0041ff 25.7%,#7921ff 38.3%,#f500ff 50.3%,#ff00fe 51.3%,#ff00e3 54%,#f0c 57%,#ff00b7 60.2%,#ff00a4 63.8%,#ff0092 67.6%,#ff0083 72%,#ff0067 82%)"></i>
<i style="background:linear-gradient(90deg,#06f 9.4%,#0040ff 25.7%,#7720ff 38.3%,#e0f 50%,#ff00fe 51.6%,#ff00e5 54.2%,#ff00ce 57.1%,#ff00b8 60.4%,#ff00a6 63.8%,#ff0095 67.6%,#ff0085 71.8%,#ff006a 81.7%)"></i>
<i style="background:linear-gradient(90deg,#0064ff 9.5%,#013eff 25.9%,#7220ff 38%,#e800ff 49.7%,#ff00fe 51.9%,#ff00e5 54.5%,#ff00ce 57.4%,#ff00ba 60.5%,#ff00a7 63.9%,#ff0097 67.6%,#ff0087 71.8%,#ff006c 81.4%)"></i>
<i style="background:linear-gradient(90deg,#0061ff 9.7%,#003dff 25.9%,#6f1fff 37.9%,#e100ff 49.4%,#ff00fe 52.3%,#ff00e6 54.9%,#ff00d0 57.6%,#f0b 60.7%,#ff00a9 64.1%,#ff0089 71.8%,#ff006e 81.1%)"></i>
<i style="background:linear-gradient(90deg,#005fff 9.9%,#003bff 25.9%,#6a1fff 37.5%,#db00ff 49%,#ff00fe 52.6%,#ff00e7 55%,#ff00d1 57.8%,#ff00bd 60.8%,#ff00ab 64.1%,#ff008b 71.7%,#ff0070 80.7%)"></i>
<i style="background:linear-gradient(90deg,#005dff 10%,#0139ff 26.1%,#691dff 37.5%,#d500ff 48.7%,#ff00fe 52.9%,#ff00e7 55.3%,#ff00d2 58.1%,#ff00be 61%,#ff00ac 64.2%,#ff008d 71.7%,#ff0073 80.4%)"></i>
<i style="background:linear-gradient(90deg,#005bff 10.4%,#0038ff 26.1%,#671cff 37.5%,#d000ff 48.5%,#ff00fe 53.2%,#ff00e8 55.7%,#ff00d2 58.4%,#ff00bf 61.3%,#ff00ae 64.4%,#ff008f 71.5%,#ff0075 80.1%)"></i>
<i style="background:linear-gradient(90deg,#0059ff 10.5%,#0037ff 26.1%,#631cff 37.2%,#cb00ff 48.2%,#ff00fe 53.6%,#ff00e8 56%,#ff00d4 58.6%,#ff00c0 61.5%,#ff00af 64.6%,#ff0091 71.5%,#f07 79.8%)"></i>
<i style="background:linear-gradient(90deg,#0057ff 10.7%,#0135ff 26.2%,#611bff 37.2%,#c500ff 47.9%,#ff00fe 53.9%,#ff00e9 56.1%,#ff00d5 58.7%,#ff00b2 64.6%,#ff0094 71.4%,#ff007a 79.4%)"></i>
<i style="background:linear-gradient(90deg,#05f 10.8%,#0034ff 26.2%,#5e1aff 37.1%,#bf00ff 47.6%,#ff00fe 54.2%,#ff00ea 56.5%,#ff00d6 59.1%,#ff00b3 64.7%,#ff0095 71.4%,#ff007c 79.1%)"></i>
<i style="background:linear-gradient(90deg,#0053ff 11%,#0032ff 26.2%,#5b1aff 36.9%,#ba00ff 47.2%,#ff00fe 54.5%,#ff00ea 56.8%,#ff00d7 59.2%,#ff00b5 64.7%,#ff0098 71.2%,#ff007f 78.8%)"></i>
<i style="background:linear-gradient(90deg,#0051ff 11.2%,#0131ff 26.4%,#5919ff 36.7%,#b400ff 46.9%,#ff00fe 54.9%,#ff00d7 59.5%,#ff00b7 64.9%,#ff009a 71.2%,#ff0081 78.5%)"></i>
<i style="background:linear-gradient(90deg,#0050ff 11.3%,#0030ff 26.4%,#5618ff 36.6%,#af00ff 46.6%,#ff00fe 55.2%,#ff00d9 59.7%,#ff00b8 65%,#ff009c 71.2%,#ff0083 78.3%)"></i>
<i style="background:linear-gradient(90deg,#004eff 11.5%,#002eff 26.4%,#5318ff 36.4%,#a0f 46.3%,#ff00fe 55.5%,#ff00d9 60%,#ff00b9 65.2%,#ff009e 71.2%,#ff0086 78%)"></i>
<i style="background:linear-gradient(90deg,#004cff 11.7%,#012dff 26.5%,#5217ff 36.4%,#a500ff 46%,#ff00fe 55.8%,#ff00db 60.2%,#f0b 65.2%,#ff00a0 71%,#f08 77.7%)"></i>
<i style="background:linear-gradient(90deg,#004aff 12%,#002cff 26.5%,#4f16ff 36.2%,#a000ff 45.6%,#ff00fe 56.1%,#ff00db 60.5%,#ff00bd 65.4%,#ff00a2 71%,#ff008b 77.3%)"></i>
<i style="background:linear-gradient(90deg,#0048ff 12.1%,#002bff 26.5%,#4d16ff 36.1%,#9b00ff 45.3%,#ff00fe 56.5%,#ff00dc 60.7%,#ff00bf 65.4%,#ff00a5 70.9%,#ff008e 77%)"></i>
<i style="background:linear-gradient(90deg,#0047ff 12.3%,#0129ff 26.7%,#4a15ff 35.9%,#9600ff 45%,#ff00fe 56.8%,#ff00de 60.8%,#ff00c0 65.5%,#ff00a7 70.7%,#ff0091 76.7%)"></i>
<i style="background:linear-gradient(90deg,#0045ff 12.5%,#0028ff 26.7%,#4814ff 35.8%,#9200ff 44.7%,#ff00fe 57.1%,#ff00df 61%,#ff00c3 65.5%,#f0a 70.6%,#ff0093 76.4%)"></i>
<i style="background:linear-gradient(90deg,#04f 12.6%,#0027ff 26.7%,#4614ff 35.6%,#8d00ff 44.3%,#f0f 57.4%,#ff00df 61.3%,#ff00c4 65.7%,#ff00ac 70.6%,#ff0096 76.1%)"></i>
<i style="background:linear-gradient(90deg,#0042ff 12.8%,#0126ff 26.9%,#4513ff 35.6%,#8900ff 44%,#f0f 57.8%,#ff00e1 61.5%,#ff00c6 65.7%,#ff00ae 70.4%,#f09 75.7%)"></i>
<i style="background:linear-gradient(90deg,#0040ff 13.1%,#0025ff 26.9%,#8500ff 43.7%,#fe00ff 57.9%,#ff00e0 62%,#ff00c8 65.9%,#ff00b0 70.4%,#ff009c 75.4%)"></i>
<i style="background:linear-gradient(90deg,#003fff 13.3%,#0024ff 26.9%,#8200ff 43.5%,#fe00ff 58.3%,#ff00e0 62.3%,#ff00c9 66%,#ff00b2 70.4%,#ff009f 75.1%)"></i>
<i style="background:linear-gradient(90deg,#003dff 13.4%,#0122ff 27%,#7d00ff 43.2%,#fe00ff 58.6%,#ff00e2 62.5%,#ff00cb 66%,#ff00b5 70.2%,#ff00a2 74.8%)"></i>
<i style="background:linear-gradient(90deg,#003cff 13.6%,#0121ff 27%,#7900ff 42.9%,#fe00ff 58.9%,#ff00e3 62.6%,#f0c 66.2%,#ff00b8 70.1%,#ff00a5 74.4%)"></i>
<i style="background:linear-gradient(90deg,#003aff 13.8%,#0020ff 27%,#7500ff 42.6%,#b900ff 51%,#fe00ff 59.2%,#ff00e3 62.9%,#ff00cf 66.2%,#f0b 69.9%,#ff00a8 74.1%)"></i>
<i style="background:linear-gradient(90deg,#0039ff 14.1%,#001fff 27%,#7100ff 42.2%,#b700ff 51%,#fe00ff 59.5%,#ff00e5 63.1%,#ff00d1 66.2%,#ff00be 69.7%,#ff00ab 73.8%)"></i>
<i style="background:linear-gradient(90deg,#0037ff 14.2%,#011eff 27.2%,#6e00ff 41.9%,#b500ff 51%,#fe00ff 59.9%,#ff00e6 63.3%,#ff00d2 66.3%,#ff00ae 73.5%)"></i>
<i style="background:linear-gradient(90deg,#0036ff 14.4%,#001dff 27.2%,#6a00ff 41.6%,#b300ff 51%,#fe00ff 60.2%,#ff00d4 66.3%,#ff00b2 73.1%)"></i>
<i style="background:linear-gradient(90deg,#0034ff 14.6%,#001cff 27.2%,#60f 41.3%,#b100ff 51%,#fe00ff 60.5%,#ff00d6 66.5%,#ff00b4 73%)"></i>
<i style="background:linear-gradient(90deg,#03f 14.7%,#011bff 27.3%,#6200ff 40.9%,#af00ff 51%,#fe00ff 60.8%,#ff00d8 66.5%,#ff00b8 72.7%)"></i>
<i style="background:linear-gradient(90deg,#0031ff 15%,#001aff 27.3%,#5f00ff 40.6%,#ad00ff 51%,#fe00ff 61.2%,#ff00d9 66.7%,#f0b 72.3%)"></i>
<i style="background:linear-gradient(90deg,#0030ff 15.2%,#001aff 27.3%,#5b00ff 40.3%,#a900ff 50.6%,#f0f 61.7%,#ff00dc 66.5%,#ff00be 72%)"></i>
<i style="background:linear-gradient(90deg,#002fff 15.4%,#0118ff 27.5%,#5800ff 40%,#a700ff 50.6%,#f0f 62%,#ff00df 66.5%,#ff00c2 71.7%)"></i>
<i style="background:linear-gradient(90deg,#002eff 15.5%,#0018ff 27.5%,#5400ff 39.6%,#a600ff 50.8%,#f0f 62.3%,#ff00e1 66.5%,#ff00c6 71.4%)"></i>
<i style="background:linear-gradient(90deg,#002cff 15.7%,#0017ff 27.5%,#5100ff 39.3%,#a500ff 50.8%,#f0f 62.6%,#ff00e2 66.7%,#ff00c9 71%)"></i>
<i style="background:linear-gradient(90deg,#002bff 16%,#0116ff 27.7%,#4e00ff 39%,#a300ff 50.8%,#f0f 62.9%,#ff00e4 66.7%,#ff00cd 70.7%)"></i>
<i style="background:linear-gradient(90deg,#002aff 16.2%,#0015ff 27.7%,#4b00ff 38.7%,#a100ff 50.8%,#f0f 63.3%,#ff00e7 66.7%,#ff00d1 70.4%)"></i>
<i style="background:linear-gradient(90deg,#0029ff 16.3%,#0014ff 27.7%,#4700ff 38.3%,#a200ff 51.1%,#fe00ff 63.4%,#ff00d4 70.1%)"></i>
<i style="background:linear-gradient(90deg,#0027ff 16.5%,#0113ff 27.8%,#40f 38%,#a000ff 51.1%,#fe00ff 63.8%,#ff00d8 69.7%)"></i>
<i style="background:linear-gradient(90deg,#0026ff 16.8%,#0012ff 27.8%,#4200ff 37.9%,#9f00ff 51.1%,#fe00ff 64.1%,#ff00dc 69.4%)"></i>
<i style="background:linear-gradient(90deg,#0025ff 17%,#0012ff 27.8%,#3f00ff 37.5%,#9d00ff 51.1%,#fe00ff 64.4%,#ff00e0 69.1%)"></i>
<i style="background:linear-gradient(90deg,#0024ff 17.2%,#0111ff 28%,#3c00ff 37.2%,#9b00ff 51.1%,#fe00ff 64.7%,#ff00e4 68.8%)"></i>
<i style="background:linear-gradient(90deg,#02f 17.5%,#0010ff 28%,#3900ff 36.9%,#9a00ff 51.1%,#fe00ff 65%,#ff00e9 68.4%)"></i>
<i style="background:linear-gradient(90deg,#0021ff 17.6%,#000fff 28%,#3700ff 36.6%,#9800ff 51.1%,#fe00ff 65.4%,#ff00ed 68.1%)"></i>
<i style="background:linear-gradient(90deg,#0020ff 17.8%,#010eff 28.2%,#3400ff 36.2%,#9700ff 51.1%,#fe00ff 65.7%,#ff00f1 67.8%)"></i>
<i style="background:linear-gradient(90deg,#001fff 18%,#000eff 28.2%,#3100ff 35.9%,#9600ff 51.3%,#fe00ff 66%,#ff00f5 67.6%)"></i>
<i style="background:linear-gradient(90deg,#001eff 18.3%,#000dff 28.2%,#2e00ff 35.6%,#9500ff 51.3%,#fe00ff 66.3%,#ff00f9 67.3%)"></i>
<i style="background:linear-gradient(90deg,#001dff 18.4%,#010cff 28.3%,#2c00ff 35.3%,#8b00ff 50%,#ff00fe 67%)"></i>
<i style="background:linear-gradient(90deg,#001cff 18.6%,#000bff 28.3%,#2900ff 35%,#9100ff 51.1%,#fc00ff 66.7%)"></i>
<i style="background:linear-gradient(90deg,#001bff 18.9%,#000bff 28.3%,#2600ff 34.6%,#8d00ff 50.8%,#f700ff 66.3%)"></i>
<i style="background:linear-gradient(90deg,#001aff 19.1%,#010aff 28.5%,#2400ff 34.3%,#8a00ff 50.5%,#f300ff 66%)"></i>
<i style="background:linear-gradient(90deg,#0019ff 19.3%,#0009ff 28.5%,#2100ff 34%,#8600ff 50.2%,#e0f 65.7%)"></i>
<i style="background:linear-gradient(90deg,#0017ff 19.6%,#0009ff 28.5%,#1f00ff 33.7%,#8300ff 49.8%,#ea00ff 65.4%)"></i>
<i style="background:linear-gradient(90deg,#0016ff 19.7%,#0108ff 28.6%,#1c00ff 33.3%,#8000ff 49.5%,#e600ff 65%)"></i>
<i style="background:linear-gradient(90deg,#0016ff 19.9%,#0007ff 28.6%,#1a00ff 33%,#7c00ff 49.2%,#e200ff 64.7%)"></i>
<i style="background:linear-gradient(90deg,#0014ff 20.2%,#0007ff 28.6%,#1800ff 32.7%,#7900ff 48.9%,#d0f 64.4%)"></i>
<i style="background:linear-gradient(90deg,#0013ff 20.4%,#0106ff 28.8%,#1500ff 32.4%,#7600ff 48.5%,#d900ff 64.1%)"></i>
<i style="background:linear-gradient(90deg,#0012ff 20.7%,#0005ff 28.8%,#1400ff 32.2%,#7300ff 48.2%,#d500ff 63.8%)"></i>
<i style="background:linear-gradient(90deg,#01f 20.9%,#0005ff 28.8%,#1200ff 31.9%,#7000ff 47.9%,#d100ff 63.4%)"></i>
<i style="background:linear-gradient(90deg,#0010ff 21.2%,#0104ff 29%,#0f00ff 31.6%,#6d00ff 47.6%,#ce00ff 63.1%)"></i>
<i style="background:linear-gradient(90deg,#000fff 21.4%,#0003ff 29%,#0d00ff 31.2%,#6300ff 46.1%,#ca00ff 62.8%)"></i>
<i style="background:linear-gradient(90deg,#000fff 21.5%,#0003ff 29%,#0b00ff 30.9%,#6100ff 46%,#c600ff 62.5%)"></i>
<i style="background:linear-gradient(90deg,#000eff 21.8%,#0102ff 29.1%,#0900ff 30.6%,#6000ff 46%,#c300ff 62.3%)"></i>
<i style="background:linear-gradient(90deg,#000dff 22%,#0002ff 29.1%,#0700ff 30.3%,#5e00ff 45.8%,#c000ff 62%)"></i>
<i style="background:linear-gradient(90deg,#000cff 22.3%,#0001ff 29.1%,#5d00ff 45.6%,#bc00ff 61.7%)"></i>
<i style="background:linear-gradient(90deg,#000bff 22.5%,#0100ff 29.3%,#5c00ff 45.6%,#b800ff 61.3%)"></i>
<i style="background:linear-gradient(90deg,#000aff 22.8%,#00f 29.3%,#5900ff 45.3%,#b500ff 61%)"></i>
<i style="background:linear-gradient(90deg,#0009ff 23%,#00f 29.3%,#5700ff 45.1%,#b200ff 60.7%)"></i>
<i style="background:linear-gradient(90deg,#0008ff 23.3%,#0100ff 29.4%,#5600ff 45.1%,#ae00ff 60.4%)"></i>
<i style="background:linear-gradient(90deg,#0007ff 23.5%,#00f 29.4%,#50f 45%,#ab00ff 60%)"></i>
<i style="background:linear-gradient(90deg,#0006ff 23.8%,#00f 27.8%,#00f 29.4%,#5300ff 44.8%,#a700ff 59.7%)"></i>
<i style="background:linear-gradient(90deg,#0005ff 23.9%,#00f 27.7%,#00f 29.4%,#5000ff 44.5%,#a400ff 59.4%)"></i>
<i style="background:linear-gradient(90deg,#0004ff 24.3%,#00f 27.3%,#00f 29.6%,#5000ff 44.5%,#a100ff 59.1%)"></i>
<i style="background:linear-gradient(90deg,#0004ff 24.6%,#00f 27%,#00f 29.6%,#4e00ff 44.3%,#9e00ff 58.7%)"></i>
<i style="background:linear-gradient(90deg,#0003ff 24.8%,#00f 26.7%,#00f 29.6%,#4c00ff 44.2%,#9b00ff 58.4%)"></i>
<i style="background:linear-gradient(90deg,#0002ff 25.1%,#0100ff 29.8%,#4b00ff 44.2%,#9800ff 58.1%)"></i>
<i style="background:linear-gradient(90deg,#0001ff 25.2%,#00f 29.8%,#4a00ff 44%,#9500ff 57.8%)"></i>
<i style="background:linear-gradient(90deg,#00f 25.6%,#00f 29.8%,#4700ff 43.7%,#9200ff 57.4%)"></i>
<i style="background:linear-gradient(90deg,#00f 25.9%,#0100ff 29.9%,#4700ff 43.7%,#8f00ff 57.1%)"></i>
<i style="background:linear-gradient(90deg,#00f 26.1%,#00f 29.9%,#4500ff 43.5%,#8d00ff 57%)"></i>
<i style="background:linear-gradient(90deg,#00f 26.4%,#00f 29.9%,#40f 43.4%,#8a00ff 56.6%)"></i>
<i style="background:linear-gradient(90deg,#00f 26.7%,#0100ff 30.1%,#4300ff 43.4%,#8700ff 56.3%)"></i>
<i style="background:linear-gradient(90deg,#00f 26.9%,#00f 30.1%,#8400ff 56%)"></i>
<i style="background:linear-gradient(90deg,#00f 27.2%,#00f 30.1%,#8100ff 55.7%)"></i>
<i style="background:linear-gradient(90deg,#00f 27.5%,#0100ff 30.3%,#7f00ff 55.3%)"></i>
<i style="background:linear-gradient(90deg,#00f 27.8%,#00f 30.3%,#7c00ff 55%)"></i>
<i style="background:linear-gradient(90deg,#00f 28.2%,#00f 30.3%,#7900ff 54.7%)"></i>
<i style="background:linear-gradient(90deg,#00f 28.3%,#0100ff 30.4%,#70f 54.4%)"></i>
<i style="background:linear-gradient(90deg,#00f 28.6%,#00f 30.4%,#7400ff 54%)"></i>
<i style="background:linear-gradient(90deg,#00f 29%,#00f 30.4%,#7200ff 53.7%)"></i>
<i style="background:linear-gradient(90deg,#00f 29.3%,#0100ff 30.6%,#6f00ff 53.4%)"></i>
<i style="background:linear-gradient(90deg,#00f 29.6%,#00f 30.6%,#6d00ff 53.1%)"></i>
<i style="background:linear-gradient(90deg,#00f 29.9%,#00f 30.6%,#0b00ff 33%,#6a00ff 52.8%)"></i>
<i style="background:linear-gradient(90deg,#00f 30.3%,#0100ff 30.7%,#1c00ff 36.6%,#6800ff 52.4%)"></i>
<i style="background:linear-gradient(90deg,#00f 30.6%,#6500ff 52.1%)"></i>
<i style="background:linear-gradient(90deg,#0100ff 30.9%,#6300ff 51.8%)"></i>
<i style="background:linear-gradient(90deg,#0300ff 31.4%,#6100ff 51.6%)"></i>
<i style="background:linear-gradient(90deg,#0400ff 31.7%,#5f00ff 51.3%)"></i>
<i style="background:linear-gradient(90deg,#0500ff 32%,#5d00ff 51%)"></i>
<i style="background:linear-gradient(90deg,#0600ff 32.4%,#5a00ff 50.6%)"></i>
<i style="background:linear-gradient(90deg,#0800ff 32.7%,#5800ff 50.3%)"></i>
<i style="background:linear-gradient(90deg,#0900ff 33.2%,#5600ff 50%)"></i>
<i style="background:linear-gradient(90deg,#0b00ff 33.5%,#5400ff 49.7%)"></i>
<i style="background:linear-gradient(90deg,#0c00ff 33.8%,#5200ff 49.4%)"></i>
<i style="background:linear-gradient(90deg,#0e00ff 34.3%,#4f00ff 49%)"></i>
<i style="background:linear-gradient(90deg,#0f00ff 34.6%,#4d00ff 48.7%)"></i>
<i style="background:linear-gradient(90deg,#1000ff 35%,#4b00ff 48.4%)"></i>
<i style="background:linear-gradient(90deg,#1200ff 35.4%,#4900ff 48.1%)"></i>
<i style="background:linear-gradient(90deg,#1300ff 35.8%,#4700ff 47.7%)"></i>
<i style="background:linear-gradient(90deg,#1400ff 36.2%,#4500ff 47.4%)"></i>
<i style="background:linear-gradient(90deg,#1500ff 36.6%,#4300ff 47.1%)"></i>
<i style="background:linear-gradient(90deg,#1700ff 37.1%,#4100ff 46.8%)"></i>
<i style="background:linear-gradient(90deg,#1800ff 37.4%,#3f00ff 46.4%)"></i>
<i style="background:linear-gradient(90deg,#1900ff 37.7%,#3e00ff 46.3%)"></i>
<i style="background:linear-gradient(90deg,#1b00ff 38.2%,#3c00ff 46%)"></i>
<i style="background:linear-gradient(90deg,#1c00ff 38.5%,#3a00ff 45.6%)"></i>
<i style="background:linear-gradient(90deg,#1e00ff 39%,#3800ff 45.3%)"></i>
<i style="background:linear-gradient(90deg,#1f00ff 39.3%,#3600ff 45%)"></i>
<i style="background:linear-gradient(90deg,#2000ff 39.6%,#3500ff 44.7%)"></i>
<i style="background:linear-gradient(90deg,#2100ff 40.1%,#30f 44.3%)"></i>
<i style="background:linear-gradient(90deg,#20f 40.5%,#3100ff 44%)"></i>
<i style="background:linear-gradient(90deg,#2400ff 40.9%,#2f00ff 43.7%)"></i>
<i style="background:linear-gradient(90deg,#2500ff 41.3%,#2d00ff 43.4%)"></i>
<i></i>
<i></i>
<i></i>
<i></i>
<i></i>
<i></i>
</div>
<svg id="ov" width="1651" height="897" viewBox="0 0 1651 897">
<defs><linearGradient id="g1" x1="0" y1="0" x2="0" y2="1"><stop offset="0" stop-color="#4c4c4c"/><stop offset="1" stop-color="#3a3a3a"/></linearGradient><linearGradient id="g2" x1="0" y1="0" x2="0" y2="1"><stop offset="0" stop-color="#2e2e2e"/><stop offset="1" stop-color="#444"/></linearGradient><linearGradient id="g3" x1="0" y1="0" x2="0" y2="1"><stop offset="0" stop-color="#585858"/><stop offset="1" stop-color="#7c7c7c"/></linearGradient><linearGradient id="g4" x1="0" y1="0" x2="0" y2="1"><stop offset="0" stop-color="#454545"/><stop offset="1" stop-color="#707070"/></linearGradient><linearGradient id="g5" x1="0" y1="0" x2="0" y2="1"><stop offset="0" stop-color="#5e5e5e"/><stop offset="1" stop-color="#7a7a7a"/></linearGradient><linearGradient id="g6" x1="0" y1="0" x2="0" y2="1"><stop offset="0" stop-color="#4a4a4a"/><stop offset="1" stop-color="#6c6c6c"/></linearGradient><linearGradient id="g7" x1="0" y1="0" x2="0" y2="1"><stop offset="0" stop-color="#4a4a4a"/><stop offset="1" stop-color="#6c6c6c"/></linearGradient><linearGradient id="g8" x1="0" y1="0" x2="1" y2="0"><stop offset="0" stop-color="rgb(219,100,100)"/><stop offset="0.45" stop-color="rgb(200,16,16)"/><stop offset="1" stop-color="rgb(110,9,9)"/></linearGradient><linearGradient id="g9" x1="0" y1="0" x2="1" y2="0"><stop offset="0" stop-color="rgb(102,213,102)"/><stop offset="0.45" stop-color="rgb(20,190,20)"/><stop offset="1" stop-color="rgb(11,104,11)"/></linearGradient><linearGradient id="g10" x1="0" y1="0" x2="1" y2="0"><stop offset="0" stop-color="rgb(102,102,219)"/><stop offset="0.45" stop-color="rgb(20,20,200)"/><stop offset="1" stop-color="rgb(11,11,110)"/></linearGradient><linearGradient id="g11" x1="0" y1="0" x2="1" y2="0"><stop offset="0" stop-color="rgb(109,213,213)"/><stop offset="0.45" stop-color="rgb(30,190,190)"/><stop offset="1" stop-color="rgb(16,104,104)"/></linearGradient><linearGradient id="g12" x1="0" y1="0" x2="1" y2="0"><stop offset="0" stop-color="rgb(219,109,219)"/><stop offset="0.45" stop-color="rgb(200,30,200)"/><stop offset="1" stop-color="rgb(110,16,110)"/></linearGradient><linearGradient id="g13" x1="0" y1="0" x2="1" y2="0"><stop offset="0" stop-color="rgb(217,217,102)"/><stop offset="0.45" stop-color="rgb(196,196,20)"/><stop offset="1" stop-color="rgb(108,108,11)"/></linearGradient><linearGradient id="g14" x1="0" y1="0" x2="1" y2="0"><stop offset="0" stop-color="rgb(218,125,125)"/><stop offset="0.45" stop-color="rgb(198,54,54)"/><stop offset="1" stop-color="rgb(109,30,30)"/></linearGradient><linearGradient id="g15" x1="0" y1="0" x2="1" y2="0"><stop offset="0" stop-color="rgb(127,213,127)"/><stop offset="0.45" stop-color="rgb(57,190,57)"/><stop offset="1" stop-color="rgb(32,104,32)"/></linearGradient><linearGradient id="g16" x1="0" y1="0" x2="1" y2="0"><stop offset="0" stop-color="rgb(127,127,218)"/><stop offset="0.45" stop-color="rgb(57,57,198)"/><stop offset="1" stop-color="rgb(32,32,109)"/></linearGradient><linearGradient id="g17" x1="0" y1="0" x2="1" y2="0"><stop offset="0" stop-color="rgb(132,213,213)"/><stop offset="0.45" stop-color="rgb(65,190,190)"/><stop offset="1" stop-color="rgb(36,104,104)"/></linearGradient><linearGradient id="g18" x1="0" y1="0" x2="1" y2="0"><stop offset="0" stop-color="rgb(218,132,218)"/><stop offset="0.45" stop-color="rgb(198,65,198)"/><stop offset="1" stop-color="rgb(109,36,109)"/></linearGradient><linearGradient id="g19" x1="0" y1="0" x2="1" y2="0"><stop offset="0" stop-color="rgb(216,216,127)"/><stop offset="0.45" stop-color="rgb(195,195,57)"/><stop offset="1" stop-color="rgb(107,107,32)"/></linearGradient><linearGradient id="g20" x1="0" y1="0" x2="1" y2="0"><stop offset="0" stop-color="rgb(217,147,147)"/><stop offset="0.45" stop-color="rgb(196,89,89)"/><stop offset="1" stop-color="rgb(108,49,49)"/></linearGradient><linearGradient id="g21" x1="0" y1="0" x2="1" y2="0"><stop offset="0" stop-color="rgb(149,213,149)"/><stop offset="0.45" stop-color="rgb(91,190,91)"/><stop offset="1" stop-color="rgb(50,104,50)"/></linearGradient><linearGradient id="g22" x1="0" y1="0" x2="1" y2="0"><stop offset="0" stop-color="rgb(149,149,217)"/><stop offset="0.45" stop-color="rgb(91,91,196)"/><stop offset="1" stop-color="rgb(50,50,108)"/></linearGradient><linearGradient id="g23" x1="0" y1="0" x2="1" y2="0"><stop offset="0" stop-color="rgb(152,213,213)"/><stop offset="0.45" stop-color="rgb(97,190,190)"/><stop offset="1" stop-color="rgb(53,104,104)"/></linearGradient><linearGradient id="g24" x1="0" y1="0" x2="1" y2="0"><stop offset="0" stop-color="rgb(217,152,217)"/><stop offset="0.45" stop-color="rgb(196,97,196)"/><stop offset="1" stop-color="rgb(108,53,108)"/></linearGradient><linearGradient id="g25" x1="0" y1="0" x2="1" y2="0"><stop offset="0" stop-color="rgb(215,215,149)"/><stop offset="0.45" stop-color="rgb(193,193,91)"/><stop offset="1" stop-color="rgb(106,106,50)"/></linearGradient><linearGradient id="g26" x1="0" y1="0" x2="1" y2="0"><stop offset="0" stop-color="rgb(215,168,168)"/><stop offset="0.45" stop-color="rgb(194,120,120)"/><stop offset="1" stop-color="rgb(107,66,66)"/></linearGradient><linearGradient id="g27" x1="0" y1="0" x2="1" y2="0"><stop offset="0" stop-color="rgb(169,213,169)"/><stop offset="0.45" stop-color="rgb(122,190,122)"/><stop offset="1" stop-color="rgb(67,104,67)"/></linearGradient><linearGradient id="g28" x1="0" y1="0" x2="1" y2="0"><stop offset="0" stop-color="rgb(169,169,215)"/><stop offset="0.45" stop-color="rgb(122,122,194)"/><stop offset="1" stop-color="rgb(67,67,107)"/></linearGradient><linearGradient id="g29" x1="0" y1="0" x2="1" y2="0"><stop offset="0" stop-color="rgb(171,213,213)"/><stop offset="0.45" stop-color="rgb(126,190,190)"/><stop offset="1" stop-color="rgb(69,104,104)"/></linearGradient><linearGradient id="g30" x1="0" y1="0" x2="1" y2="0"><stop offset="0" stop-color="rgb(215,171,215)"/><stop offset="0.45" stop-color="rgb(194,126,194)"/><stop offset="1" stop-color="rgb(107,69,107)"/></linearGradient><linearGradient id="g31" x1="0" y1="0" x2="1" y2="0"><stop offset="0" stop-color="rgb(214,214,169)"/><stop offset="0.45" stop-color="rgb(192,192,122)"/><stop offset="1" stop-color="rgb(106,106,67)"/></linearGradient><linearGradient id="g32" x1="0" y1="0" x2="1" y2="0"><stop offset="0" stop-color="rgb(214,188,188)"/><stop offset="0.45" stop-color="rgb(192,152,152)"/><stop offset="1" stop-color="rgb(106,83,83)"/></linearGradient><linearGradient id="g33" x1="0" y1="0" x2="1" y2="0"><stop offset="0" stop-color="rgb(188,213,188)"/><stop offset="0.45" stop-color="rgb(153,190,153)"/><stop offset="1" stop-color="rgb(84,104,84)"/></linearGradient><linearGradient id="g34" x1="0" y1="0" x2="1" y2="0"><stop offset="0" stop-color="rgb(188,188,214)"/><stop offset="0.45" stop-color="rgb(153,153,192)"/><stop offset="1" stop-color="rgb(84,84,106)"/></linearGradient><linearGradient id="g35" x1="0" y1="0" x2="1" y2="0"><stop offset="0" stop-color="rgb(190,213,213)"/><stop offset="0.45" stop-color="rgb(155,190,190)"/><stop offset="1" stop-color="rgb(85,104,104)"/></linearGradient><linearGradient id="g36" x1="0" y1="0" x2="1" y2="0"><stop offset="0" stop-color="rgb(214,190,214)"/><stop offset="0.45" stop-color="rgb(192,155,192)"/><stop offset="1" stop-color="rgb(106,85,106)"/></linearGradient><linearGradient id="g37" x1="0" y1="0" x2="1" y2="0"><stop offset="0" stop-color="rgb(214,214,188)"/><stop offset="0.45" stop-color="rgb(191,191,153)"/><stop offset="1" stop-color="rgb(105,105,84)"/></linearGradient><linearGradient id="g38" x1="0" y1="0" x2="1" y2="0"><stop offset="0" stop-color="rgb(242,242,242)"/><stop offset="0.45" stop-color="rgb(235,235,235)"/><stop offset="1" stop-color="rgb(129,129,129)"/></linearGradient><linearGradient id="g39" x1="0" y1="0" x2="0" y2="1"><stop offset="0" stop-color="#dada55"/><stop offset="0.22" stop-color="#c6c606"/><stop offset="0.5" stop-color="#b4b404"/><stop offset="1" stop-color="#585800"/></linearGradient><linearGradient id="g40" x1="0" y1="0" x2="0" y2="1"><stop offset="0" stop-color="#dada55"/><stop offset="0.22" stop-color="#c6c606"/><stop offset="0.5" stop-color="#b4b404"/><stop offset="1" stop-color="#585800"/></linearGradient><linearGradient id="g41" x1="0" y1="0" x2="0" y2="1"><stop offset="0" stop-color="#dada55"/><stop offset="0.22" stop-color="#c6c606"/><stop offset="0.5" stop-color="#b4b404"/><stop offset="1" stop-color="#585800"/></linearGradient><linearGradient id="g42" x1="0" y1="0" x2="0" y2="1"><stop offset="0" stop-color="#ff4646"/><stop offset="0.12" stop-color="#ff0000"/><stop offset="0.45" stop-color="#fa0000"/><stop offset="1" stop-color="#8c0000"/></linearGradient><linearGradient id="g43" x1="0" y1="0" x2="0" y2="1"><stop offset="0" stop-color="#1e961e"/><stop offset="0.2" stop-color="#008200"/><stop offset="0.5" stop-color="#007c00"/><stop offset="1" stop-color="#004e00"/></linearGradient><linearGradient id="g44" x1="0" y1="0" x2="0" y2="1"><stop offset="0" stop-color="#4646ff"/><stop offset="0.08" stop-color="#0000ff"/><stop offset="0.55" stop-color="#0000f6"/><stop offset="1" stop-color="#000068"/></linearGradient><linearGradient id="g45" x1="0" y1="0" x2="0" y2="1"><stop offset="0" stop-color="#363636"/><stop offset="0.48" stop-color="#2c2c2c"/><stop offset="0.52" stop-color="#1c1c1c"/><stop offset="1" stop-color="#141414"/></linearGradient><linearGradient id="g46" x1="0" y1="0" x2="0" y2="1"><stop offset="0" stop-color="#2e2e2e"/><stop offset="1" stop-color="#1e1e1e"/></linearGradient><linearGradient id="g47" x1="0" y1="0" x2="0" y2="1"><stop offset="0" stop-color="#3e3e3e"/><stop offset="1" stop-color="#2a2a2a"/></linearGradient><linearGradient id="g48" x1="0" y1="0" x2="0" y2="1"><stop offset="0" stop-color="#484848"/><stop offset="0.5" stop-color="#383838"/><stop offset="1" stop-color="#2c2c2c"/></linearGradient><linearGradient id="g49" x1="0" y1="0" x2="0" y2="1"><stop offset="0" stop-color="#9a9a9a"/><stop offset="0.25" stop-color="#888"/><stop offset="1" stop-color="#5e5e5e"/></linearGradient><linearGradient id="g50" x1="0" y1="0" x2="0" y2="1"><stop offset="0" stop-color="#666"/><stop offset="1" stop-color="#9a9a9a"/></linearGradient><linearGradient id="g51" x1="0" y1="0" x2="0" y2="1"><stop offset="0" stop-color="#a0a0a0"/><stop offset="0.15" stop-color="#909090"/><stop offset="1" stop-color="#5c5c5c"/></linearGradient><linearGradient id="g52" x1="0" y1="0" x2="0" y2="1"><stop offset="0" stop-color="#1a1a1a"/><stop offset="1" stop-color="#383838"/></linearGradient><linearGradient id="g53" x1="0" y1="0" x2="0" y2="1"><stop offset="0" stop-color="#a8a8a8"/><stop offset="1" stop-color="#7c7c7c"/></linearGradient><linearGradient id="g54" x1="0" y1="0" x2="0" y2="1"><stop offset="0" stop-color="#a0a0a0"/><stop offset="1" stop-color="#787878"/></linearGradient><linearGradient id="g55" x1="0" y1="0" x2="0" y2="1"><stop offset="0" stop-color="#b8b8b8"/><stop offset="0.5" stop-color="#a0a0a0"/><stop offset="0.52" stop-color="#888"/><stop offset="1" stop-color="#8c8c8c"/></linearGradient><linearGradient id="g56" x1="0" y1="0" x2="0" y2="1"><stop offset="0" stop-color="#a8a8a8"/><stop offset="1" stop-color="#787878"/></linearGradient><linearGradient id="g57" x1="0" y1="0" x2="0" y2="1"><stop offset="0" stop-color="#8a8a8a"/><stop offset="1" stop-color="#b4b4b4"/></linearGradient><linearGradient id="g58" x1="0" y1="0" x2="0" y2="1"><stop offset="0" stop-color="#8a8a8a"/><stop offset="1" stop-color="#b4b4b4"/></linearGradient><linearGradient id="g59" x1="0" y1="0" x2="0" y2="1"><stop offset="0" stop-color="#8a8a8a"/><stop offset="1" stop-color="#b4b4b4"/></linearGradient><linearGradient id="g60" x1="0" y1="0" x2="0" y2="1"><stop offset="0" stop-color="#8a8a8a"/><stop offset="1" stop-color="#b4b4b4"/></linearGradient><linearGradient id="g61" x1="0" y1="0" x2="0" y2="1"><stop offset="0" stop-color="#8a8a8a"/><stop offset="1" stop-color="#b4b4b4"/></linearGradient><linearGradient id="g62" x1="0" y1="0" x2="0" y2="1"><stop offset="0" stop-color="#3c3c3c"/><stop offset="1" stop-color="#343434"/></linearGradient><linearGradient id="g63" x1="0" y1="0" x2="0" y2="1"><stop offset="0" stop-color="#3a3a3a"/><stop offset="1" stop-color="#282828"/></linearGradient><linearGradient id="g64" x1="0" y1="0" x2="0" y2="1"><stop offset="0" stop-color="#aaaaaa"/><stop offset="1" stop-color="#8a8a8a"/></linearGradient><linearGradient id="g65" x1="0" y1="0" x2="0" y2="1"><stop offset="0" stop-color="#909090"/><stop offset="1" stop-color="#b8b8b8"/></linearGradient><linearGradient id="g66" x1="0" y1="0" x2="0" y2="1"><stop offset="0" stop-color="#909090"/><stop offset="1" stop-color="#b8b8b8"/></linearGradient></defs>
<rect x="0" y="0" width="1651" height="36" fill="#212121"/>
<rect x="0" y="0" width="71" height="35.5" fill="url(#g1)"/>
<rect x="71" y="0" width="41" height="35.5" fill="url(#g1)"/>
<line x1="70.5" y1="0" x2="70.5" y2="35.5" stroke="#7c7c7c" stroke-width="1"/>
<line x1="111.5" y1="2" x2="111.5" y2="35.5" stroke="#7c7c7c" stroke-width="1"/>
<text x="5" y="23.3" font-size="14.5" textLength="58" lengthAdjust="spacingAndGlyphs" fill="#efefef" stroke="#efefef" stroke-width=".3">History 1</text>
<circle cx="89.5" cy="19.5" r="12" fill="url(#g2)"/>
<line x1="86" y1="20.5" x2="93" y2="20.5" stroke="#9a9a9a" stroke-width="1.1"/>
<line x1="89.5" y1="17" x2="89.5" y2="24" stroke="#9a9a9a" stroke-width="1.1"/>
<rect x="1051" y="0" width="134" height="35" fill="url(#g3)"/>
<rect x="1051" y="0" width="7" height="35" fill="#1fd01f"/>
<text x="1062" y="12" font-size="13.5" textLength="84" lengthAdjust="spacingAndGlyphs" fill="#f4f4f4" stroke="#f4f4f4" stroke-width=".3">X-Rite i1Pro 2</text>
<text x="1062" y="31" font-size="13.5" textLength="70" lengthAdjust="spacingAndGlyphs" fill="#f4f4f4" stroke="#f4f4f4" stroke-width=".3">Direct View</text>
<circle cx="1161" cy="17" r="12.5" fill="url(#g4)"/>
<path d="M1155.5,15h11l-5.5,6.5z" fill="#fff"/>
<rect x="1186" y="0" width="45" height="35" fill="url(#g3)"/>
<line x1="1185.5" y1="0" x2="1185.5" y2="35" stroke="#3a3a3a" stroke-width="1"/>
<circle cx="1211" cy="16.5" r="15.5" fill="#0000ee" stroke="#d8d8ff" stroke-width="1.4"/>
<text x="1211" y="21" font-size="12.5" text-anchor="middle" font-weight="bold" fill="#fff">226</text>
<rect x="1238" y="0" width="162.5" height="35" fill="url(#g3)"/>
<rect x="1238" y="0" width="7" height="35" fill="#1fd01f"/>
<text x="1249" y="12" font-size="13.5" textLength="80" lengthAdjust="spacingAndGlyphs" fill="#f4f4f4" stroke="#f4f4f4" stroke-width=".3">Mobile Forge</text>
<circle cx="1380" cy="17" r="12.5" fill="url(#g4)"/>
<path d="M1374.5,15h11l-5.5,6.5z" fill="#fff"/>
<rect x="1408.5" y="0" width="178.5" height="35" fill="url(#g3)"/>
<rect x="1408.5" y="0" width="7" height="35" fill="#e6e614"/>
<text x="1419" y="12" font-size="13.5" textLength="131" lengthAdjust="spacingAndGlyphs" fill="#f4f4f4" stroke="#f4f4f4" stroke-width=".3">Direct Display Control</text>
<circle cx="1567" cy="17" r="12.5" fill="url(#g4)"/>
<path d="M1561.5,15h11l-5.5,6.5z" fill="#fff"/>
<rect x="1591.5" y="-6" width="41" height="38.5" rx="5" fill="url(#g5)" stroke="#b8b8b8"/>
<rect x="1634.5" y="-6" width="41" height="38.5" rx="5" fill="url(#g5)" stroke="#b8b8b8"/>
<circle cx="1611.5" cy="15" r="12" fill="url(#g6)"/>
<circle cx="1611.5" cy="15" r="5" fill="none" stroke="#d0d0d0" stroke-width="2.4"/>
<circle cx="1611.5" cy="15" r="7.6" fill="none" stroke="#d0d0d0" stroke-width="2.6" stroke-dasharray="3 2.97"/>
<circle cx="1655" cy="15" r="12" fill="url(#g7)"/>
<path d="M1652.5,9l-5,6l5,6z" fill="#fff"/>
<text x="47.7" y="92" font-size="38.8" textLength="316.2" lengthAdjust="spacingAndGlyphs" fill="#f6f6f6">Saturation Sweeps</text>
<text x="81.5" y="619.1" font-size="24.9" textLength="210.6" lengthAdjust="spacingAndGlyphs" fill="#f2f2f2">Avg dE2000: 5,6</text>
<text x="61.9" y="659.0" font-size="24.9" textLength="250.2" lengthAdjust="spacingAndGlyphs" fill="#f2f2f2">Max dE2000: 10,02</text>
<text x="39.2" y="705.4" font-size="24.9" textLength="212.6" lengthAdjust="spacingAndGlyphs" fill="#f2f2f2">Current Reading</text>
<text x="38.3" y="739.1" font-size="20.8" textLength="100.3" lengthAdjust="spacingAndGlyphs" fill="#f2f2f2">x: 0,4173</text>
<text x="189.5" y="739.1" font-size="20.8" textLength="101.4" lengthAdjust="spacingAndGlyphs" fill="#f2f2f2">y: 0,5281</text>
<text x="38.3" y="779.0" font-size="20.8" textLength="94.8" lengthAdjust="spacingAndGlyphs" fill="#f2f2f2">fL: 45,73</text>
<text x="38.3" y="812.7" font-size="20.8" textLength="155.9" lengthAdjust="spacingAndGlyphs" fill="#f2f2f2">cd/m²: 156,69</text>
<rect x="66.7" y="146" width="301.5" height="399.70000000000005" fill="#262626"/>
<line x1="106.9" y1="146" x2="106.9" y2="545.7" stroke="#9a9a9a" stroke-width="1"/>
<line x1="147.10000000000002" y1="146" x2="147.10000000000002" y2="545.7" stroke="#9a9a9a" stroke-width="1"/>
<line x1="187.3" y1="146" x2="187.3" y2="545.7" stroke="#9a9a9a" stroke-width="1"/>
<line x1="227.5" y1="146" x2="227.5" y2="545.7" stroke="#9a9a9a" stroke-width="1"/>
<line x1="267.7" y1="146" x2="267.7" y2="545.7" stroke="#9a9a9a" stroke-width="1"/>
<line x1="307.90000000000003" y1="146" x2="307.90000000000003" y2="545.7" stroke="#9a9a9a" stroke-width="1"/>
<line x1="348.1" y1="146" x2="348.1" y2="545.7" stroke="#9a9a9a" stroke-width="1"/>
<line x1="66.7" y1="146" x2="368.2" y2="146" stroke="#b4b4b4" stroke-width="1.3"/>
<line x1="368.2" y1="146" x2="368.2" y2="545.7" stroke="#b4b4b4" stroke-width="1.3"/>
<line x1="66.7" y1="545.7" x2="368.2" y2="545.7" stroke="#b4b4b4" stroke-width="1.3"/>
<line x1="66.7" y1="146" x2="66.7" y2="545.7" stroke="#b4b4b4" stroke-width="1.3"/>
<text x="161.3" y="140.9" font-size="13.8" textLength="78.1" lengthAdjust="spacingAndGlyphs" fill="#e0e0e0" stroke="#e0e0e0" stroke-width=".3">DeltaE 2000</text>
<line x1="60.7" y1="146.4" x2="66.7" y2="146.4" stroke="#ddd" stroke-width="1.6"/>
<text x="65.8" y="184.7" font-size="13.9" text-anchor="end" textLength="34.0" lengthAdjust="spacingAndGlyphs" fill="#e0e0e0" stroke="#e0e0e0" stroke-width=".3">100%</text>
<rect x="67.3" y="152.8" width="78.1" height="5.8" fill="url(#g8)" stroke="#000" stroke-width="1.5"/>
<rect x="67.3" y="160.8" width="53" height="5.8" fill="url(#g9)" stroke="#000" stroke-width="1.5"/>
<rect x="67.3" y="168.8" width="49.2" height="5.8" fill="url(#g10)" stroke="#000" stroke-width="1.5"/>
<rect x="67.3" y="176.8" width="165.3" height="5.8" fill="url(#g11)" stroke="#000" stroke-width="1.5"/>
<rect x="67.3" y="184.8" width="86.1" height="5.8" fill="url(#g12)" stroke="#000" stroke-width="1.5"/>
<rect x="67.3" y="192.8" width="81.5" height="5.8" fill="url(#g13)" stroke="#000" stroke-width="1.5"/>
<line x1="60.7" y1="213.0" x2="66.7" y2="213.0" stroke="#ddd" stroke-width="1.6"/>
<text x="65.8" y="251.3" font-size="13.9" text-anchor="end" textLength="26.6" lengthAdjust="spacingAndGlyphs" fill="#e0e0e0" stroke="#e0e0e0" stroke-width=".3">80%</text>
<rect x="67.3" y="219.4" width="96.3" height="5.8" fill="url(#g14)" stroke="#000" stroke-width="1.5"/>
<rect x="67.3" y="227.4" width="52.1" height="5.8" fill="url(#g15)" stroke="#000" stroke-width="1.5"/>
<rect x="67.3" y="235.4" width="48.1" height="5.8" fill="url(#g16)" stroke="#000" stroke-width="1.5"/>
<rect x="67.3" y="243.4" width="164.4" height="5.8" fill="url(#g17)" stroke="#000" stroke-width="1.5"/>
<rect x="67.3" y="251.4" width="113.2" height="5.8" fill="url(#g18)" stroke="#000" stroke-width="1.5"/>
<rect x="67.3" y="259.4" width="82.8" height="5.8" fill="url(#g19)" stroke="#000" stroke-width="1.5"/>
<line x1="60.7" y1="279.6" x2="66.7" y2="279.6" stroke="#ddd" stroke-width="1.6"/>
<text x="65.8" y="317.90000000000003" font-size="13.9" text-anchor="end" textLength="26.6" lengthAdjust="spacingAndGlyphs" fill="#e0e0e0" stroke="#e0e0e0" stroke-width=".3">60%</text>
<rect x="67.3" y="286.0" width="115" height="5.8" fill="url(#g20)" stroke="#000" stroke-width="1.5"/>
<rect x="67.3" y="294.0" width="55.8" height="5.8" fill="url(#g21)" stroke="#000" stroke-width="1.5"/>
<rect x="67.3" y="302.0" width="48.1" height="5.8" fill="url(#g22)" stroke="#000" stroke-width="1.5"/>
<rect x="67.3" y="310.0" width="168.2" height="5.8" fill="url(#g23)" stroke="#000" stroke-width="1.5"/>
<rect x="67.3" y="318.0" width="134.1" height="5.8" fill="url(#g24)" stroke="#000" stroke-width="1.5"/>
<rect x="67.3" y="326.0" width="87.4" height="5.8" fill="url(#g25)" stroke="#000" stroke-width="1.5"/>
<line x1="60.7" y1="346.2" x2="66.7" y2="346.2" stroke="#ddd" stroke-width="1.6"/>
<text x="65.8" y="384.5" font-size="13.9" text-anchor="end" textLength="26.6" lengthAdjust="spacingAndGlyphs" fill="#e0e0e0" stroke="#e0e0e0" stroke-width=".3">40%</text>
<rect x="67.3" y="352.6" width="135" height="5.8" fill="url(#g26)" stroke="#000" stroke-width="1.5"/>
<rect x="67.3" y="360.6" width="70.4" height="5.8" fill="url(#g27)" stroke="#000" stroke-width="1.5"/>
<rect x="67.3" y="368.6" width="70.4" height="5.8" fill="url(#g28)" stroke="#000" stroke-width="1.5"/>
<rect x="67.3" y="376.6" width="173.3" height="5.8" fill="url(#g29)" stroke="#000" stroke-width="1.5"/>
<rect x="67.3" y="384.6" width="148" height="5.8" fill="url(#g30)" stroke="#000" stroke-width="1.5"/>
<rect x="67.3" y="392.6" width="101.5" height="5.8" fill="url(#g31)" stroke="#000" stroke-width="1.5"/>
<line x1="60.7" y1="412.79999999999995" x2="66.7" y2="412.79999999999995" stroke="#ddd" stroke-width="1.6"/>
<text x="65.8" y="451.09999999999997" font-size="13.9" text-anchor="end" textLength="26.6" lengthAdjust="spacingAndGlyphs" fill="#e0e0e0" stroke="#e0e0e0" stroke-width=".3">20%</text>
<rect x="67.3" y="419.2" width="138.5" height="5.8" fill="url(#g32)" stroke="#000" stroke-width="1.5"/>
<rect x="67.3" y="427.2" width="109.2" height="5.8" fill="url(#g33)" stroke="#000" stroke-width="1.5"/>
<rect x="67.3" y="435.2" width="140.6" height="5.8" fill="url(#g34)" stroke="#000" stroke-width="1.5"/>
<rect x="67.3" y="443.2" width="181.7" height="5.8" fill="url(#g35)" stroke="#000" stroke-width="1.5"/>
<rect x="67.3" y="451.2" width="168.5" height="5.8" fill="url(#g36)" stroke="#000" stroke-width="1.5"/>
<rect x="67.3" y="459.2" width="140.6" height="5.8" fill="url(#g37)" stroke="#000" stroke-width="1.5"/>
<line x1="60.7" y1="479.4" x2="66.7" y2="479.4" stroke="#ddd" stroke-width="1.6"/>
<text x="65.8" y="517.6999999999999" font-size="13.9" text-anchor="end" textLength="23.2" lengthAdjust="spacingAndGlyphs" fill="#e0e0e0" stroke="#e0e0e0" stroke-width=".3">100</text>
<rect x="67.3" y="533.8" width="201.4" height="5.8" fill="url(#g38)" stroke="#000" stroke-width="1.5"/>
<line x1="60.7" y1="545.6" x2="66.7" y2="545.6" stroke="#ddd" stroke-width="1.6"/>
<line x1="66.7" y1="545.7" x2="66.7" y2="550.7" stroke="#ddd" stroke-width="1.4"/>
<text x="66.7" y="566.9" font-size="13.8" text-anchor="middle" fill="#e0e0e0" stroke="#e0e0e0" stroke-width=".3">0</text>
<line x1="106.9" y1="545.7" x2="106.9" y2="550.7" stroke="#ddd" stroke-width="1.4"/>
<text x="106.9" y="566.9" font-size="13.8" text-anchor="middle" fill="#e0e0e0" stroke="#e0e0e0" stroke-width=".3">2</text>
<line x1="147.10000000000002" y1="545.7" x2="147.10000000000002" y2="550.7" stroke="#ddd" stroke-width="1.4"/>
<text x="147.10000000000002" y="566.9" font-size="13.8" text-anchor="middle" fill="#e0e0e0" stroke="#e0e0e0" stroke-width=".3">4</text>
<line x1="187.3" y1="545.7" x2="187.3" y2="550.7" stroke="#ddd" stroke-width="1.4"/>
<text x="187.3" y="566.9" font-size="13.8" text-anchor="middle" fill="#e0e0e0" stroke="#e0e0e0" stroke-width=".3">6</text>
<line x1="227.5" y1="545.7" x2="227.5" y2="550.7" stroke="#ddd" stroke-width="1.4"/>
<text x="227.5" y="566.9" font-size="13.8" text-anchor="middle" fill="#e0e0e0" stroke="#e0e0e0" stroke-width=".3">8</text>
<line x1="267.7" y1="545.7" x2="267.7" y2="550.7" stroke="#ddd" stroke-width="1.4"/>
<text x="267.7" y="566.9" font-size="13.8" text-anchor="middle" fill="#e0e0e0" stroke="#e0e0e0" stroke-width=".3">10</text>
<line x1="307.90000000000003" y1="545.7" x2="307.90000000000003" y2="550.7" stroke="#ddd" stroke-width="1.4"/>
<text x="307.90000000000003" y="566.9" font-size="13.8" text-anchor="middle" fill="#e0e0e0" stroke="#e0e0e0" stroke-width=".3">12</text>
<line x1="348.1" y1="545.7" x2="348.1" y2="550.7" stroke="#ddd" stroke-width="1.4"/>
<text x="348.1" y="566.9" font-size="13.8" text-anchor="middle" fill="#e0e0e0" stroke="#e0e0e0" stroke-width=".3">14</text>
<rect x="419.5" y="80.7" width="140" height="305.5" fill="#262626"/>
<line x1="419.5" y1="80.80000000000001" x2="559.5" y2="80.80000000000001" stroke="#8c8c8c" stroke-width="1"/>
<line x1="414.5" y1="80.80000000000001" x2="419.5" y2="80.80000000000001" stroke="#ddd" stroke-width="1.4"/>
<text x="413.9" y="86.20000000000002" font-size="13.8" text-anchor="end" fill="#e0e0e0" stroke="#e0e0e0" stroke-width=".3">15</text>
<line x1="419.5" y1="131.7" x2="559.5" y2="131.7" stroke="#8c8c8c" stroke-width="1"/>
<line x1="414.5" y1="131.7" x2="419.5" y2="131.7" stroke="#ddd" stroke-width="1.4"/>
<text x="413.9" y="137.1" font-size="13.8" text-anchor="end" fill="#e0e0e0" stroke="#e0e0e0" stroke-width=".3">10</text>
<line x1="419.5" y1="182.6" x2="559.5" y2="182.6" stroke="#8c8c8c" stroke-width="1"/>
<line x1="414.5" y1="182.6" x2="419.5" y2="182.6" stroke="#ddd" stroke-width="1.4"/>
<text x="413.9" y="188.0" font-size="13.8" text-anchor="end" fill="#e0e0e0" stroke="#e0e0e0" stroke-width=".3">5</text>
<line x1="419.5" y1="233.5" x2="559.5" y2="233.5" stroke="#8c8c8c" stroke-width="1"/>
<line x1="414.5" y1="233.5" x2="419.5" y2="233.5" stroke="#ddd" stroke-width="1.4"/>
<text x="413.9" y="238.9" font-size="13.8" text-anchor="end" fill="#e0e0e0" stroke="#e0e0e0" stroke-width=".3">0</text>
<line x1="419.5" y1="284.4" x2="559.5" y2="284.4" stroke="#8c8c8c" stroke-width="1"/>
<line x1="414.5" y1="284.4" x2="419.5" y2="284.4" stroke="#ddd" stroke-width="1.4"/>
<text x="413.9" y="289.79999999999995" font-size="13.8" text-anchor="end" fill="#e0e0e0" stroke="#e0e0e0" stroke-width=".3">-5</text>
<line x1="419.5" y1="335.3" x2="559.5" y2="335.3" stroke="#8c8c8c" stroke-width="1"/>
<line x1="414.5" y1="335.3" x2="419.5" y2="335.3" stroke="#ddd" stroke-width="1.4"/>
<text x="413.9" y="340.7" font-size="13.8" text-anchor="end" fill="#e0e0e0" stroke="#e0e0e0" stroke-width=".3">-10</text>
<line x1="419.5" y1="386.2" x2="559.5" y2="386.2" stroke="#8c8c8c" stroke-width="1"/>
<line x1="414.5" y1="386.2" x2="419.5" y2="386.2" stroke="#ddd" stroke-width="1.4"/>
<text x="413.9" y="391.59999999999997" font-size="13.8" text-anchor="end" fill="#e0e0e0" stroke="#e0e0e0" stroke-width=".3">-15</text>
<line x1="419.5" y1="80.7" x2="419.5" y2="386.2" stroke="#b4b4b4" stroke-width="1.2"/>
<line x1="559.5" y1="80.7" x2="559.5" y2="386.2" stroke="#b4b4b4" stroke-width="1.2"/>
<line x1="419.5" y1="80.7" x2="559.5" y2="80.7" stroke="#b4b4b4" stroke-width="1.2"/>
<line x1="419.5" y1="386.2" x2="559.5" y2="386.2" stroke="#b4b4b4" stroke-width="1.2"/>
<line x1="419.5" y1="386.2" x2="419.5" y2="391.2" stroke="#ddd" stroke-width="1.4"/>
<line x1="559.5" y1="386.2" x2="559.5" y2="391.2" stroke="#ddd" stroke-width="1.4"/>
<text x="476.5" y="74.9" font-size="13.6" text-anchor="middle" fill="#e0e0e0" stroke="#e0e0e0" stroke-width=".3">DeltaL</text>
<text x="489.5" y="402.0" font-size="13.8" text-anchor="middle" textLength="33.7" lengthAdjust="spacingAndGlyphs" fill="#e0e0e0" stroke="#e0e0e0" stroke-width=".3">100%</text>
<rect x="433.5" y="233.5" width="112" height="47.0316" fill="url(#g39)" stroke="#000" stroke-width="1.2"/>
<rect x="610.5" y="80.7" width="140" height="305.5" fill="#262626"/>
<line x1="610.5" y1="80.80000000000001" x2="750.5" y2="80.80000000000001" stroke="#8c8c8c" stroke-width="1"/>
<line x1="605.5" y1="80.80000000000001" x2="610.5" y2="80.80000000000001" stroke="#ddd" stroke-width="1.4"/>
<text x="604.9" y="86.20000000000002" font-size="13.8" text-anchor="end" fill="#e0e0e0" stroke="#e0e0e0" stroke-width=".3">15</text>
<line x1="610.5" y1="131.7" x2="750.5" y2="131.7" stroke="#8c8c8c" stroke-width="1"/>
<line x1="605.5" y1="131.7" x2="610.5" y2="131.7" stroke="#ddd" stroke-width="1.4"/>
<text x="604.9" y="137.1" font-size="13.8" text-anchor="end" fill="#e0e0e0" stroke="#e0e0e0" stroke-width=".3">10</text>
<line x1="610.5" y1="182.6" x2="750.5" y2="182.6" stroke="#8c8c8c" stroke-width="1"/>
<line x1="605.5" y1="182.6" x2="610.5" y2="182.6" stroke="#ddd" stroke-width="1.4"/>
<text x="604.9" y="188.0" font-size="13.8" text-anchor="end" fill="#e0e0e0" stroke="#e0e0e0" stroke-width=".3">5</text>
<line x1="610.5" y1="233.5" x2="750.5" y2="233.5" stroke="#8c8c8c" stroke-width="1"/>
<line x1="605.5" y1="233.5" x2="610.5" y2="233.5" stroke="#ddd" stroke-width="1.4"/>
<text x="604.9" y="238.9" font-size="13.8" text-anchor="end" fill="#e0e0e0" stroke="#e0e0e0" stroke-width=".3">0</text>
<line x1="610.5" y1="284.4" x2="750.5" y2="284.4" stroke="#8c8c8c" stroke-width="1"/>
<line x1="605.5" y1="284.4" x2="610.5" y2="284.4" stroke="#ddd" stroke-width="1.4"/>
<text x="604.9" y="289.79999999999995" font-size="13.8" text-anchor="end" fill="#e0e0e0" stroke="#e0e0e0" stroke-width=".3">-5</text>
<line x1="610.5" y1="335.3" x2="750.5" y2="335.3" stroke="#8c8c8c" stroke-width="1"/>
<line x1="605.5" y1="335.3" x2="610.5" y2="335.3" stroke="#ddd" stroke-width="1.4"/>
<text x="604.9" y="340.7" font-size="13.8" text-anchor="end" fill="#e0e0e0" stroke="#e0e0e0" stroke-width=".3">-10</text>
<line x1="610.5" y1="386.2" x2="750.5" y2="386.2" stroke="#8c8c8c" stroke-width="1"/>
<line x1="605.5" y1="386.2" x2="610.5" y2="386.2" stroke="#ddd" stroke-width="1.4"/>
<text x="604.9" y="391.59999999999997" font-size="13.8" text-anchor="end" fill="#e0e0e0" stroke="#e0e0e0" stroke-width=".3">-15</text>
<line x1="610.5" y1="80.7" x2="610.5" y2="386.2" stroke="#b4b4b4" stroke-width="1.2"/>
<line x1="750.5" y1="80.7" x2="750.5" y2="386.2" stroke="#b4b4b4" stroke-width="1.2"/>
<line x1="610.5" y1="80.7" x2="750.5" y2="80.7" stroke="#b4b4b4" stroke-width="1.2"/>
<line x1="610.5" y1="386.2" x2="750.5" y2="386.2" stroke="#b4b4b4" stroke-width="1.2"/>
<line x1="610.5" y1="386.2" x2="610.5" y2="391.2" stroke="#ddd" stroke-width="1.4"/>
<line x1="750.5" y1="386.2" x2="750.5" y2="391.2" stroke="#ddd" stroke-width="1.4"/>
<text x="667.5" y="74.9" font-size="13.6" text-anchor="middle" fill="#e0e0e0" stroke="#e0e0e0" stroke-width=".3">DeltaC</text>
<text x="680.5" y="402.0" font-size="13.8" text-anchor="middle" textLength="33.7" lengthAdjust="spacingAndGlyphs" fill="#e0e0e0" stroke="#e0e0e0" stroke-width=".3">100%</text>
<rect x="624.5" y="131.191" width="112" height="102.309" fill="url(#g40)" stroke="#000" stroke-width="1.2"/>
<rect x="801.5" y="80.7" width="140" height="305.5" fill="#262626"/>
<line x1="801.5" y1="80.80000000000001" x2="941.5" y2="80.80000000000001" stroke="#8c8c8c" stroke-width="1"/>
<line x1="796.5" y1="80.80000000000001" x2="801.5" y2="80.80000000000001" stroke="#ddd" stroke-width="1.4"/>
<text x="795.9" y="86.20000000000002" font-size="13.8" text-anchor="end" fill="#e0e0e0" stroke="#e0e0e0" stroke-width=".3">15</text>
<line x1="801.5" y1="131.7" x2="941.5" y2="131.7" stroke="#8c8c8c" stroke-width="1"/>
<line x1="796.5" y1="131.7" x2="801.5" y2="131.7" stroke="#ddd" stroke-width="1.4"/>
<text x="795.9" y="137.1" font-size="13.8" text-anchor="end" fill="#e0e0e0" stroke="#e0e0e0" stroke-width=".3">10</text>
<line x1="801.5" y1="182.6" x2="941.5" y2="182.6" stroke="#8c8c8c" stroke-width="1"/>
<line x1="796.5" y1="182.6" x2="801.5" y2="182.6" stroke="#ddd" stroke-width="1.4"/>
<text x="795.9" y="188.0" font-size="13.8" text-anchor="end" fill="#e0e0e0" stroke="#e0e0e0" stroke-width=".3">5</text>
<line x1="801.5" y1="233.5" x2="941.5" y2="233.5" stroke="#8c8c8c" stroke-width="1"/>
<line x1="796.5" y1="233.5" x2="801.5" y2="233.5" stroke="#ddd" stroke-width="1.4"/>
<text x="795.9" y="238.9" font-size="13.8" text-anchor="end" fill="#e0e0e0" stroke="#e0e0e0" stroke-width=".3">0</text>
<line x1="801.5" y1="284.4" x2="941.5" y2="284.4" stroke="#8c8c8c" stroke-width="1"/>
<line x1="796.5" y1="284.4" x2="801.5" y2="284.4" stroke="#ddd" stroke-width="1.4"/>
<text x="795.9" y="289.79999999999995" font-size="13.8" text-anchor="end" fill="#e0e0e0" stroke="#e0e0e0" stroke-width=".3">-5</text>
<line x1="801.5" y1="335.3" x2="941.5" y2="335.3" stroke="#8c8c8c" stroke-width="1"/>
<line x1="796.5" y1="335.3" x2="801.5" y2="335.3" stroke="#ddd" stroke-width="1.4"/>
<text x="795.9" y="340.7" font-size="13.8" text-anchor="end" fill="#e0e0e0" stroke="#e0e0e0" stroke-width=".3">-10</text>
<line x1="801.5" y1="386.2" x2="941.5" y2="386.2" stroke="#8c8c8c" stroke-width="1"/>
<line x1="796.5" y1="386.2" x2="801.5" y2="386.2" stroke="#ddd" stroke-width="1.4"/>
<text x="795.9" y="391.59999999999997" font-size="13.8" text-anchor="end" fill="#e0e0e0" stroke="#e0e0e0" stroke-width=".3">-15</text>
<line x1="801.5" y1="80.7" x2="801.5" y2="386.2" stroke="#b4b4b4" stroke-width="1.2"/>
<line x1="941.5" y1="80.7" x2="941.5" y2="386.2" stroke="#b4b4b4" stroke-width="1.2"/>
<line x1="801.5" y1="80.7" x2="941.5" y2="80.7" stroke="#b4b4b4" stroke-width="1.2"/>
<line x1="801.5" y1="386.2" x2="941.5" y2="386.2" stroke="#b4b4b4" stroke-width="1.2"/>
<line x1="801.5" y1="386.2" x2="801.5" y2="391.2" stroke="#ddd" stroke-width="1.4"/>
<line x1="941.5" y1="386.2" x2="941.5" y2="391.2" stroke="#ddd" stroke-width="1.4"/>
<text x="858.5" y="74.9" font-size="13.6" text-anchor="middle" fill="#e0e0e0" stroke="#e0e0e0" stroke-width=".3">DeltaH</text>
<text x="871.5" y="402.0" font-size="13.8" text-anchor="middle" textLength="33.7" lengthAdjust="spacingAndGlyphs" fill="#e0e0e0" stroke="#e0e0e0" stroke-width=".3">100%</text>
<rect x="815.5" y="198.379" width="112" height="35.121" fill="url(#g41)" stroke="#000" stroke-width="1.2"/>
<rect x="388" y="418" width="572" height="157.5" fill="#000"/>
<rect x="408.0" y="425" width="96" height="128.7" fill="rgb(192,192,164)"/>
<rect x="408.0" y="425" width="96" height="64.7" fill="rgb(172,184,170)"/>
<rect x="408.0" y="425" width="96" height="128.7" fill="none" stroke="#f0f0f0" stroke-width="1"/>
<text x="456.0" y="568" font-size="11" text-anchor="middle" font-weight="bold" fill="#fff">20%</text>
<rect x="519.7" y="425" width="96" height="128.7" fill="rgb(192,192,132)"/>
<rect x="519.7" y="425" width="96" height="64.7" fill="rgb(172,184,138)"/>
<rect x="519.7" y="425" width="96" height="128.7" fill="none" stroke="#f0f0f0" stroke-width="1"/>
<text x="567.7" y="568" font-size="11" text-anchor="middle" font-weight="bold" fill="#fff">40%</text>
<rect x="631.4" y="425" width="96" height="128.7" fill="rgb(192,192,104)"/>
<rect x="631.4" y="425" width="96" height="64.7" fill="rgb(170,182,104)"/>
<rect x="631.4" y="425" width="96" height="128.7" fill="none" stroke="#f0f0f0" stroke-width="1"/>
<text x="679.4" y="568" font-size="11" text-anchor="middle" font-weight="bold" fill="#fff">60%</text>
<rect x="743.1" y="425" width="96" height="128.7" fill="rgb(194,194,72)"/>
<rect x="743.1" y="425" width="96" height="64.7" fill="rgb(170,178,62)"/>
<rect x="743.1" y="425" width="96" height="128.7" fill="none" stroke="#f0f0f0" stroke-width="1"/>
<text x="791.1" y="568" font-size="11" text-anchor="middle" font-weight="bold" fill="#fff">80%</text>
<rect x="854.8" y="425" width="96" height="128.7" fill="rgb(196,196,40)"/>
<rect x="854.8" y="425" width="96" height="64.7" fill="rgb(174,182,0)"/>
<rect x="854.8" y="425" width="96" height="128.7" fill="none" stroke="#f0f0f0" stroke-width="1"/>
<text x="902.8" y="568" font-size="11" text-anchor="middle" font-weight="bold" fill="#fff">100%</text>
<text transform="translate(401,470) rotate(-90)" font-size="11" font-weight="bold" fill="#fff">Actual</text>
<text transform="translate(401,542) rotate(-90)" font-size="11" font-weight="bold" fill="#fff">Target</text>
<rect x="366.5" y="626.5" width="246.39999999999998" height="175.79999999999995" fill="#262626"/>
<line x1="366.5" y1="645.2" x2="612.9" y2="645.2" stroke="#8c8c8c" stroke-width="1"/>
<line x1="361.5" y1="645.2" x2="366.5" y2="645.2" stroke="#ddd" stroke-width="1.4"/>
<text x="360.9" y="650.6" font-size="13.8" text-anchor="end" fill="#e0e0e0" stroke="#e0e0e0" stroke-width=".3">40</text>
<line x1="366.5" y1="679.9" x2="612.9" y2="679.9" stroke="#8c8c8c" stroke-width="1"/>
<line x1="361.5" y1="679.9" x2="366.5" y2="679.9" stroke="#ddd" stroke-width="1.4"/>
<text x="360.9" y="685.3" font-size="13.8" text-anchor="end" fill="#e0e0e0" stroke="#e0e0e0" stroke-width=".3">20</text>
<line x1="366.5" y1="714.6" x2="612.9" y2="714.6" stroke="#8c8c8c" stroke-width="1"/>
<line x1="361.5" y1="714.6" x2="366.5" y2="714.6" stroke="#ddd" stroke-width="1.4"/>
<text x="360.9" y="720.0" font-size="13.8" text-anchor="end" fill="#e0e0e0" stroke="#e0e0e0" stroke-width=".3">0</text>
<line x1="366.5" y1="749.3000000000001" x2="612.9" y2="749.3000000000001" stroke="#8c8c8c" stroke-width="1"/>
<line x1="361.5" y1="749.3000000000001" x2="366.5" y2="749.3000000000001" stroke="#ddd" stroke-width="1.4"/>
<text x="360.9" y="754.7" font-size="13.8" text-anchor="end" fill="#e0e0e0" stroke="#e0e0e0" stroke-width=".3">-20</text>
<line x1="366.5" y1="784.0" x2="612.9" y2="784.0" stroke="#8c8c8c" stroke-width="1"/>
<line x1="361.5" y1="784.0" x2="366.5" y2="784.0" stroke="#ddd" stroke-width="1.4"/>
<text x="360.9" y="789.4" font-size="13.8" text-anchor="end" fill="#e0e0e0" stroke="#e0e0e0" stroke-width=".3">-40</text>
<line x1="366.5" y1="626.5" x2="366.5" y2="802.3" stroke="#b4b4b4" stroke-width="1.2"/>
<line x1="612.9" y1="626.5" x2="612.9" y2="802.3" stroke="#b4b4b4" stroke-width="1.2"/>
<line x1="366.5" y1="626.5" x2="612.9" y2="626.5" stroke="#b4b4b4" stroke-width="1.2"/>
<line x1="366.5" y1="802.3" x2="612.9" y2="802.3" stroke="#b4b4b4" stroke-width="1.2"/>
<line x1="366.5" y1="802.3" x2="366.5" y2="807.3" stroke="#ddd" stroke-width="1.4"/>
<line x1="612.9" y1="802.3" x2="612.9" y2="807.3" stroke="#ddd" stroke-width="1.4"/>
<text x="476" y="621.5" font-size="13.6" text-anchor="middle" textLength="81" lengthAdjust="spacingAndGlyphs" fill="#e0e0e0" stroke="#e0e0e0" stroke-width=".3">RGB Balance</text>
<text x="489" y="816.5" font-size="13.8" text-anchor="middle" textLength="33.7" lengthAdjust="spacingAndGlyphs" fill="#e0e0e0" stroke="#e0e0e0" stroke-width=".3">100%</text>
<rect x="391.8" y="714.6" width="64.4" height="40.5" fill="url(#g42)" stroke="#000" stroke-width="1.2"/>
<rect x="458.3" y="714.6" width="64.0" height="19.2" fill="url(#g43)" stroke="#000" stroke-width="1.2"/>
<rect x="524.0" y="714.6" width="64.4" height="84.4" fill="url(#g44)" stroke="#000" stroke-width="1.2"/>
<rect x="633" y="598" width="698" height="28.9" fill="url(#g45)"/>
<rect x="633" y="598" width="19" height="28.9" fill="#000"/>
<text x="812.6" y="618.2" font-size="15.5" textLength="41.7" lengthAdjust="spacingAndGlyphs" fill="#fff" class="tb">20%</text>
<text x="917.4" y="618.2" font-size="15.5" textLength="41.7" lengthAdjust="spacingAndGlyphs" fill="#fff" class="tb">40%</text>
<text x="1022.2" y="618.2" font-size="15.5" textLength="41.7" lengthAdjust="spacingAndGlyphs" fill="#fff" class="tb">60%</text>
<text x="1127.0" y="618.2" font-size="15.5" textLength="41.7" lengthAdjust="spacingAndGlyphs" fill="#fff" class="tb">80%</text>
<text x="1231.8" y="618.2" font-size="15.5" textLength="53.6" lengthAdjust="spacingAndGlyphs" fill="#fff" class="tb">100%</text>
<rect x="633" y="626.7" width="698" height="27.73" fill="#404040"/>
<rect x="633" y="626.7" width="19" height="27.73" fill="url(#g46)"/>
<text x="657.6" y="647.7" font-size="15.5" textLength="77.7" lengthAdjust="spacingAndGlyphs" fill="#fff" class="tb">x: CIE31</text>
<text x="812.6" y="647.7" font-size="15.5" textLength="65.6" lengthAdjust="spacingAndGlyphs" fill="#fff" class="tb">0,3138</text>
<text x="917.4" y="647.7" font-size="15.5" textLength="65.6" lengthAdjust="spacingAndGlyphs" fill="#fff" class="tb">0,3404</text>
<text x="1022.2" y="647.7" font-size="15.5" textLength="65.6" lengthAdjust="spacingAndGlyphs" fill="#fff" class="tb">0,3666</text>
<text x="1127.0" y="647.7" font-size="15.5" textLength="65.6" lengthAdjust="spacingAndGlyphs" fill="#fff" class="tb">0,3909</text>
<text x="1231.8" y="647.7" font-size="15.5" textLength="65.6" lengthAdjust="spacingAndGlyphs" fill="#fff" class="tb">0,4173</text>
<rect x="633" y="654.13" width="698" height="27.73" fill="#7c7c7c"/>
<rect x="633" y="654.13" width="19" height="27.73" fill="url(#g47)"/>
<text x="657.6" y="675.13" font-size="15.5" textLength="76.4" lengthAdjust="spacingAndGlyphs" fill="#f2f2f2" class="tb">y: CIE31</text>
<text x="812.6" y="675.13" font-size="15.5" textLength="65.6" lengthAdjust="spacingAndGlyphs" fill="#f2f2f2" class="tb">0,3486</text>
<text x="917.4" y="675.13" font-size="15.5" textLength="65.6" lengthAdjust="spacingAndGlyphs" fill="#f2f2f2" class="tb">0,3951</text>
<text x="1022.2" y="675.13" font-size="15.5" textLength="65.6" lengthAdjust="spacingAndGlyphs" fill="#f2f2f2" class="tb">0,4426</text>
<text x="1127.0" y="675.13" font-size="15.5" textLength="65.6" lengthAdjust="spacingAndGlyphs" fill="#f2f2f2" class="tb">0,4835</text>
<text x="1231.8" y="675.13" font-size="15.5" textLength="65.6" lengthAdjust="spacingAndGlyphs" fill="#f2f2f2" class="tb">0,5281</text>
<rect x="633" y="681.5600000000001" width="698" height="27.73" fill="#404040"/>
<rect x="633" y="681.5600000000001" width="19" height="27.73" fill="url(#g46)"/>
<text x="657.6" y="702.5600000000001" font-size="15.5" textLength="11.5" lengthAdjust="spacingAndGlyphs" fill="#fff" class="tb">Y</text>
<text x="812.6" y="702.5600000000001" font-size="15.5" textLength="89.5" lengthAdjust="spacingAndGlyphs" fill="#fff" class="tb">173,7572</text>
<text x="917.4" y="702.5600000000001" font-size="15.5" textLength="89.5" lengthAdjust="spacingAndGlyphs" fill="#fff" class="tb">167,8329</text>
<text x="1022.2" y="702.5600000000001" font-size="15.5" textLength="89.5" lengthAdjust="spacingAndGlyphs" fill="#fff" class="tb">164,5287</text>
<text x="1127.0" y="702.5600000000001" font-size="15.5" textLength="89.5" lengthAdjust="spacingAndGlyphs" fill="#fff" class="tb">160,3186</text>
<text x="1231.8" y="702.5600000000001" font-size="15.5" textLength="89.5" lengthAdjust="spacingAndGlyphs" fill="#fff" class="tb">156,6876</text>
<rect x="633" y="708.99" width="698" height="27.73" fill="#7c7c7c"/>
<rect x="633" y="708.99" width="19" height="27.73" fill="url(#g47)"/>
<text x="657.6" y="729.99" font-size="15.5" textLength="135.7" lengthAdjust="spacingAndGlyphs" fill="#f2f2f2" class="tb">Target x:CIE31</text>
<text x="812.6" y="729.99" font-size="15.5" textLength="65.6" lengthAdjust="spacingAndGlyphs" fill="#f2f2f2" class="tb">0,3344</text>
<text x="917.4" y="729.99" font-size="15.5" textLength="65.6" lengthAdjust="spacingAndGlyphs" fill="#f2f2f2" class="tb">0,3564</text>
<text x="1022.2" y="729.99" font-size="15.5" textLength="65.6" lengthAdjust="spacingAndGlyphs" fill="#f2f2f2" class="tb">0,3773</text>
<text x="1127.0" y="729.99" font-size="15.5" textLength="65.6" lengthAdjust="spacingAndGlyphs" fill="#f2f2f2" class="tb">0,3969</text>
<text x="1231.8" y="729.99" font-size="15.5" textLength="65.6" lengthAdjust="spacingAndGlyphs" fill="#f2f2f2" class="tb">0,4193</text>
<rect x="633" y="736.4200000000001" width="698" height="27.73" fill="#404040"/>
<rect x="633" y="736.4200000000001" width="19" height="27.73" fill="url(#g46)"/>
<text x="657.6" y="757.4200000000001" font-size="15.5" textLength="134.4" lengthAdjust="spacingAndGlyphs" fill="#fff" class="tb">Target y:CIE31</text>
<text x="812.6" y="757.4200000000001" font-size="15.5" textLength="65.6" lengthAdjust="spacingAndGlyphs" fill="#fff" class="tb">0,3648</text>
<text x="917.4" y="757.4200000000001" font-size="15.5" textLength="65.6" lengthAdjust="spacingAndGlyphs" fill="#fff" class="tb">0,4013</text>
<text x="1022.2" y="757.4200000000001" font-size="15.5" textLength="65.6" lengthAdjust="spacingAndGlyphs" fill="#fff" class="tb">0,4358</text>
<text x="1127.0" y="757.4200000000001" font-size="15.5" textLength="65.6" lengthAdjust="spacingAndGlyphs" fill="#fff" class="tb">0,4682</text>
<text x="1231.8" y="757.4200000000001" font-size="15.5" textLength="65.6" lengthAdjust="spacingAndGlyphs" fill="#fff" class="tb">0,5053</text>
<rect x="633" y="763.85" width="698" height="27.73" fill="#7c7c7c"/>
<rect x="633" y="763.85" width="19" height="27.73" fill="url(#g47)"/>
<text x="657.6" y="784.85" font-size="15.5" textLength="75.4" lengthAdjust="spacingAndGlyphs" fill="#f2f2f2" class="tb">Target Y</text>
<text x="812.6" y="784.85" font-size="15.5" textLength="89.5" lengthAdjust="spacingAndGlyphs" fill="#f2f2f2" class="tb">193,2079</text>
<text x="917.4" y="784.85" font-size="15.5" textLength="89.5" lengthAdjust="spacingAndGlyphs" fill="#f2f2f2" class="tb">189,8166</text>
<text x="1022.2" y="784.85" font-size="15.5" textLength="89.5" lengthAdjust="spacingAndGlyphs" fill="#f2f2f2" class="tb">187,2108</text>
<text x="1127.0" y="784.85" font-size="15.5" textLength="89.5" lengthAdjust="spacingAndGlyphs" fill="#f2f2f2" class="tb">185,1658</text>
<text x="1231.8" y="784.85" font-size="15.5" textLength="89.5" lengthAdjust="spacingAndGlyphs" fill="#f2f2f2" class="tb">183,1887</text>
<rect x="633" y="791.28" width="698" height="27.73" fill="#404040"/>
<rect x="633" y="791.28" width="19" height="27.73" fill="url(#g46)"/>
<text x="657.6" y="812.28" font-size="15.5" textLength="78.4" lengthAdjust="spacingAndGlyphs" fill="#fff" class="tb">ΔE 2000</text>
<text x="812.6" y="812.28" font-size="15.5" textLength="65.6" lengthAdjust="spacingAndGlyphs" fill="#fff" class="tb">7,0432</text>
<text x="917.4" y="812.28" font-size="15.5" textLength="65.6" lengthAdjust="spacingAndGlyphs" fill="#fff" class="tb">5,0894</text>
<text x="1022.2" y="812.28" font-size="15.5" textLength="65.6" lengthAdjust="spacingAndGlyphs" fill="#fff" class="tb">4,3920</text>
<text x="1127.0" y="812.28" font-size="15.5" textLength="65.6" lengthAdjust="spacingAndGlyphs" fill="#fff" class="tb">4,1754</text>
<text x="1231.8" y="812.28" font-size="15.5" textLength="65.6" lengthAdjust="spacingAndGlyphs" fill="#fff" class="tb">4,1168</text>
<path d="M967.5,49.5H1638.5V590H967.5Z M973.5,55.5V584H1632.5V55.5Z" fill="#1e1e1e" fill-rule="evenodd"/>
<path d="M1009,78H1629V556H1009Z M1274.3,542.3L1274.3,542.2L1274.2,542.2L1274.1,542.3L1274.1,542.4L1274.0,542.5L1273.9,542.6L1273.8,542.6L1273.7,542.6L1273.6,542.6L1273.4,542.7L1273.3,542.8L1273.2,542.8L1273.0,542.9L1272.8,542.9L1272.7,542.8L1272.4,542.8L1272.2,542.8L1272.0,542.8L1271.7,542.9L1271.4,542.9L1271.1,542.8L1270.7,542.7L1270.2,542.5L1269.6,542.1L1268.8,541.6L1267.9,541.0L1266.9,540.3L1265.8,539.5L1264.7,538.6L1263.3,537.5L1261.7,536.3L1260.0,534.9L1258.1,533.3L1256.0,531.6L1253.9,529.7L1251.5,527.7L1249.0,525.6L1246.3,523.3L1243.2,520.8L1239.9,518.0L1236.2,515.0L1232.3,511.8L1228.2,508.5L1223.9,504.8L1219.2,500.8L1214.2,496.4L1208.8,491.5L1203.1,486.3L1197.2,480.6L1190.8,474.1L1183.8,466.5L1176.0,457.6L1167.4,447.2L1158.2,435.5L1148.5,422.6L1138.4,408.5L1127.9,393.1L1117.1,376.4L1106.1,358.7L1095.0,340.3L1084.1,321.4L1073.4,302.3L1063.4,283.2L1054.3,264.3L1046.1,246.0L1038.7,228.4L1032.2,211.8L1026.6,196.3L1022.0,182.2L1018.2,169.4L1015.4,158.0L1013.3,147.8L1011.9,138.8L1011.2,130.9L1011.2,123.9L1011.7,117.7L1012.8,112.2L1014.5,107.5L1016.7,103.4L1019.3,99.9L1022.4,97.0L1025.8,94.8L1029.5,93.0L1033.5,91.7L1037.8,90.8L1042.2,90.2L1046.8,89.8L1051.6,89.5L1056.4,89.3L1061.3,89.3L1066.2,89.3L1071.1,89.3L1076.0,89.4L1081.0,89.6L1086.1,89.9L1091.3,90.2L1096.7,90.5L1102.2,90.9L1107.9,91.4L1113.7,91.9L1119.7,92.4L1125.8,93.0L1132.2,93.6L1138.8,94.3L1145.6,95.0L1152.6,95.7L1159.9,96.5L1167.5,97.3L1175.3,98.2L1183.3,99.1L1191.7,100.0L1200.3,101.0L1209.2,102.0L1218.5,103.1L1228.0,104.2L1237.8,105.3L1247.9,106.5L1258.3,107.7L1269.0,108.9L1280.0,110.2L1291.3,111.5L1302.9,112.8L1314.7,114.2L1326.7,115.5L1338.9,117.0L1351.3,118.4L1363.9,119.8L1376.5,121.3L1388.9,122.7L1401.2,124.2L1413.4,125.6L1425.4,126.9L1437.5,128.3L1449.4,129.7L1461.0,131.0L1472.1,132.3L1482.8,133.5L1493.1,134.7L1503.0,135.9L1512.5,137.0L1521.6,138.0L1530.1,139.0L1538.2,139.9L1545.8,140.8L1552.9,141.6L1559.7,142.4L1566.0,143.1L1572.0,143.8L1577.7,144.5L1583.1,145.1L1588.3,145.7L1593.2,146.3L1597.9,146.8L1602.4,147.3L1606.5,147.8L1610.5,148.3L1614.2,148.7L1617.6,149.1L1620.6,149.4L1623.1,149.7L1625.6,150.0L1628.5,150.3L1628.5,150.3L1628.5,177.3Z" fill="#262626" fill-rule="evenodd"/>
<path d="M1274.3,542.3L1274.3,542.2L1274.2,542.2L1274.1,542.3L1274.1,542.4L1274.0,542.5L1273.9,542.6L1273.8,542.6L1273.7,542.6L1273.6,542.6L1273.4,542.7L1273.3,542.8L1273.2,542.8L1273.0,542.9L1272.8,542.9L1272.7,542.8L1272.4,542.8L1272.2,542.8L1272.0,542.8L1271.7,542.9L1271.4,542.9L1271.1,542.8L1270.7,542.7L1270.2,542.5L1269.6,542.1L1268.8,541.6L1267.9,541.0L1266.9,540.3L1265.8,539.5L1264.7,538.6L1263.3,537.5L1261.7,536.3L1260.0,534.9L1258.1,533.3L1256.0,531.6L1253.9,529.7L1251.5,527.7L1249.0,525.6L1246.3,523.3L1243.2,520.8L1239.9,518.0L1236.2,515.0L1232.3,511.8L1228.2,508.5L1223.9,504.8L1219.2,500.8L1214.2,496.4L1208.8,491.5L1203.1,486.3L1197.2,480.6L1190.8,474.1L1183.8,466.5L1176.0,457.6L1167.4,447.2L1158.2,435.5L1148.5,422.6L1138.4,408.5L1127.9,393.1L1117.1,376.4L1106.1,358.7L1095.0,340.3L1084.1,321.4L1073.4,302.3L1063.4,283.2L1054.3,264.3L1046.1,246.0L1038.7,228.4L1032.2,211.8L1026.6,196.3L1022.0,182.2L1018.2,169.4L1015.4,158.0L1013.3,147.8L1011.9,138.8L1011.2,130.9L1011.2,123.9L1011.7,117.7L1012.8,112.2L1014.5,107.5L1016.7,103.4L1019.3,99.9L1022.4,97.0L1025.8,94.8L1029.5,93.0L1033.5,91.7L1037.8,90.8L1042.2,90.2L1046.8,89.8L1051.6,89.5L1056.4,89.3L1061.3,89.3L1066.2,89.3L1071.1,89.3L1076.0,89.4L1081.0,89.6L1086.1,89.9L1091.3,90.2L1096.7,90.5L1102.2,90.9L1107.9,91.4L1113.7,91.9L1119.7,92.4L1125.8,93.0L1132.2,93.6L1138.8,94.3L1145.6,95.0L1152.6,95.7L1159.9,96.5L1167.5,97.3L1175.3,98.2L1183.3,99.1L1191.7,100.0L1200.3,101.0L1209.2,102.0L1218.5,103.1L1228.0,104.2L1237.8,105.3L1247.9,106.5L1258.3,107.7L1269.0,108.9L1280.0,110.2L1291.3,111.5L1302.9,112.8L1314.7,114.2L1326.7,115.5L1338.9,117.0L1351.3,118.4L1363.9,119.8L1376.5,121.3L1388.9,122.7L1401.2,124.2L1413.4,125.6L1425.4,126.9L1437.5,128.3L1449.4,129.7L1461.0,131.0L1472.1,132.3L1482.8,133.5L1493.1,134.7L1503.0,135.9L1512.5,137.0L1521.6,138.0L1530.1,139.0L1538.2,139.9L1545.8,140.8L1552.9,141.6L1559.7,142.4L1566.0,143.1L1572.0,143.8L1577.7,144.5L1583.1,145.1L1588.3,145.7L1593.2,146.3L1597.9,146.8L1602.4,147.3L1606.5,147.8L1610.5,148.3L1614.2,148.7L1617.6,149.1L1620.6,149.4L1623.1,149.7L1625.6,150.0L1628.5,150.3L1628.5,150.3L1628.5,177.3Z M1474.11,140.01L1138.5,108.54L1190.47,430.04Z" fill="#000" fill-opacity="0.4" fill-rule="evenodd"/>
<rect x="1009.6" y="78.2" width="618.7" height="477.2" fill="none" stroke="#b4b4b4" stroke-width="1.3"/>
<text x="1302" y="74.5" font-size="13.6" text-anchor="middle" textLength="82" lengthAdjust="spacingAndGlyphs" fill="#e0e0e0" stroke="#e0e0e0" stroke-width=".3">CIE 1976 u'v'</text>
<line x1="1009.7" y1="555.4" x2="1009.7" y2="561" stroke="#ddd" stroke-width="2.2"/>
<text x="1009.7" y="575.9" font-size="13.8" text-anchor="middle" fill="#e0e0e0" stroke="#e0e0e0" stroke-width=".3">0</text>
<line x1="1004" y1="555.5" x2="1009.6" y2="555.5" stroke="#ddd" stroke-width="1.5"/>
<text x="1003.8" y="560.7" font-size="13.8" text-anchor="end" fill="#e0e0e0" stroke="#e0e0e0" stroke-width=".3">0</text>
<line x1="1061.22" y1="555.4" x2="1061.22" y2="561" stroke="#ddd" stroke-width="1.5"/>
<text x="1061.22" y="575.9" font-size="13.8" text-anchor="middle" fill="#e0e0e0" stroke="#e0e0e0" stroke-width=".3">0,05</text>
<line x1="1004" y1="515.77" x2="1009.6" y2="515.77" stroke="#ddd" stroke-width="1.5"/>
<text x="1003.8" y="520.97" font-size="13.8" text-anchor="end" fill="#e0e0e0" stroke="#e0e0e0" stroke-width=".3">0,05</text>
<line x1="1112.74" y1="555.4" x2="1112.74" y2="561" stroke="#ddd" stroke-width="1.5"/>
<text x="1112.74" y="575.9" font-size="13.8" text-anchor="middle" fill="#e0e0e0" stroke="#e0e0e0" stroke-width=".3">0,1</text>
<line x1="1004" y1="476.03999999999996" x2="1009.6" y2="476.03999999999996" stroke="#ddd" stroke-width="1.5"/>
<text x="1003.8" y="481.23999999999995" font-size="13.8" text-anchor="end" fill="#e0e0e0" stroke="#e0e0e0" stroke-width=".3">0,1</text>
<line x1="1164.26" y1="555.4" x2="1164.26" y2="561" stroke="#ddd" stroke-width="1.5"/>
<text x="1164.26" y="575.9" font-size="13.8" text-anchor="middle" fill="#e0e0e0" stroke="#e0e0e0" stroke-width=".3">0,15</text>
<line x1="1004" y1="436.30999999999995" x2="1009.6" y2="436.30999999999995" stroke="#ddd" stroke-width="1.5"/>
<text x="1003.8" y="441.50999999999993" font-size="13.8" text-anchor="end" fill="#e0e0e0" stroke="#e0e0e0" stroke-width=".3">0,15</text>
<line x1="1215.7800000000002" y1="555.4" x2="1215.7800000000002" y2="561" stroke="#ddd" stroke-width="1.5"/>
<text x="1215.7800000000002" y="575.9" font-size="13.8" text-anchor="middle" fill="#e0e0e0" stroke="#e0e0e0" stroke-width=".3">0,2</text>
<line x1="1004" y1="396.58" x2="1009.6" y2="396.58" stroke="#ddd" stroke-width="1.5"/>
<text x="1003.8" y="401.78" font-size="13.8" text-anchor="end" fill="#e0e0e0" stroke="#e0e0e0" stroke-width=".3">0,2</text>
<line x1="1267.3000000000002" y1="555.4" x2="1267.3000000000002" y2="561" stroke="#ddd" stroke-width="1.5"/>
<text x="1267.3000000000002" y="575.9" font-size="13.8" text-anchor="middle" fill="#e0e0e0" stroke="#e0e0e0" stroke-width=".3">0,25</text>
<line x1="1004" y1="356.85" x2="1009.6" y2="356.85" stroke="#ddd" stroke-width="1.5"/>
<text x="1003.8" y="362.05" font-size="13.8" text-anchor="end" fill="#e0e0e0" stroke="#e0e0e0" stroke-width=".3">0,25</text>
<line x1="1318.8200000000002" y1="555.4" x2="1318.8200000000002" y2="561" stroke="#ddd" stroke-width="1.5"/>
<text x="1318.8200000000002" y="575.9" font-size="13.8" text-anchor="middle" fill="#e0e0e0" stroke="#e0e0e0" stroke-width=".3">0,3</text>
<line x1="1004" y1="317.11999999999995" x2="1009.6" y2="317.11999999999995" stroke="#ddd" stroke-width="1.5"/>
<text x="1003.8" y="322.31999999999994" font-size="13.8" text-anchor="end" fill="#e0e0e0" stroke="#e0e0e0" stroke-width=".3">0,3</text>
<line x1="1370.3400000000001" y1="555.4" x2="1370.3400000000001" y2="561" stroke="#ddd" stroke-width="1.5"/>
<text x="1370.3400000000001" y="575.9" font-size="13.8" text-anchor="middle" fill="#e0e0e0" stroke="#e0e0e0" stroke-width=".3">0,35</text>
<line x1="1004" y1="277.39" x2="1009.6" y2="277.39" stroke="#ddd" stroke-width="1.5"/>
<text x="1003.8" y="282.59" font-size="13.8" text-anchor="end" fill="#e0e0e0" stroke="#e0e0e0" stroke-width=".3">0,35</text>
<line x1="1421.8600000000001" y1="555.4" x2="1421.8600000000001" y2="561" stroke="#ddd" stroke-width="1.5"/>
<text x="1421.8600000000001" y="575.9" font-size="13.8" text-anchor="middle" fill="#e0e0e0" stroke="#e0e0e0" stroke-width=".3">0,4</text>
<line x1="1004" y1="237.65999999999997" x2="1009.6" y2="237.65999999999997" stroke="#ddd" stroke-width="1.5"/>
<text x="1003.8" y="242.85999999999996" font-size="13.8" text-anchor="end" fill="#e0e0e0" stroke="#e0e0e0" stroke-width=".3">0,4</text>
<line x1="1473.38" y1="555.4" x2="1473.38" y2="561" stroke="#ddd" stroke-width="1.5"/>
<text x="1473.38" y="575.9" font-size="13.8" text-anchor="middle" fill="#e0e0e0" stroke="#e0e0e0" stroke-width=".3">0,45</text>
<line x1="1004" y1="197.93" x2="1009.6" y2="197.93" stroke="#ddd" stroke-width="1.5"/>
<text x="1003.8" y="203.13" font-size="13.8" text-anchor="end" fill="#e0e0e0" stroke="#e0e0e0" stroke-width=".3">0,45</text>
<line x1="1524.9" y1="555.4" x2="1524.9" y2="561" stroke="#ddd" stroke-width="1.5"/>
<text x="1524.9" y="575.9" font-size="13.8" text-anchor="middle" fill="#e0e0e0" stroke="#e0e0e0" stroke-width=".3">0,5</text>
<line x1="1004" y1="158.2" x2="1009.6" y2="158.2" stroke="#ddd" stroke-width="1.5"/>
<text x="1003.8" y="163.39999999999998" font-size="13.8" text-anchor="end" fill="#e0e0e0" stroke="#e0e0e0" stroke-width=".3">0,5</text>
<line x1="1576.42" y1="555.4" x2="1576.42" y2="561" stroke="#ddd" stroke-width="1.5"/>
<text x="1576.42" y="575.9" font-size="13.8" text-anchor="middle" fill="#e0e0e0" stroke="#e0e0e0" stroke-width=".3">0,55</text>
<line x1="1004" y1="118.46999999999997" x2="1009.6" y2="118.46999999999997" stroke="#ddd" stroke-width="1.5"/>
<text x="1003.8" y="123.66999999999997" font-size="13.8" text-anchor="end" fill="#e0e0e0" stroke="#e0e0e0" stroke-width=".3">0,55</text>
<rect x="1253.6" y="168.2" width="13.3" height="13.3" fill="none" stroke="#fff" stroke-width="1.3" stroke-opacity="0.85"/>
<rect x="1304.6" y="158.9" width="13.3" height="13.3" fill="none" stroke="#fff" stroke-width="1.3" stroke-opacity="0.85"/>
<rect x="1352.2" y="152.3" width="13.3" height="13.3" fill="none" stroke="#fff" stroke-width="1.3" stroke-opacity="0.85"/>
<rect x="1404.6" y="142.9" width="13.3" height="13.3" fill="none" stroke="#fff" stroke-width="1.3" stroke-opacity="0.85"/>
<rect x="1467.1" y="132.9" width="13.3" height="13.3" fill="none" stroke="#fff" stroke-width="1.3" stroke-opacity="0.85"/>
<rect x="1186.2" y="156.1" width="13.3" height="13.3" fill="none" stroke="#fff" stroke-width="1.3" stroke-opacity="0.85"/>
<rect x="1169.1" y="139.1" width="13.3" height="13.3" fill="none" stroke="#fff" stroke-width="1.3" stroke-opacity="0.85"/>
<rect x="1154.7" y="124.7" width="13.3" height="13.3" fill="none" stroke="#fff" stroke-width="1.3" stroke-opacity="0.85"/>
<rect x="1142.5" y="112.5" width="13.3" height="13.3" fill="none" stroke="#fff" stroke-width="1.3" stroke-opacity="0.85"/>
<rect x="1131.9" y="101.9" width="13.3" height="13.3" fill="none" stroke="#fff" stroke-width="1.3" stroke-opacity="0.85"/>
<rect x="1203.2" y="205.3" width="13.3" height="13.3" fill="none" stroke="#fff" stroke-width="1.3" stroke-opacity="0.85"/>
<rect x="1200.6" y="240.8" width="13.3" height="13.3" fill="none" stroke="#fff" stroke-width="1.3" stroke-opacity="0.85"/>
<rect x="1196.9" y="284.4" width="13.3" height="13.3" fill="none" stroke="#fff" stroke-width="1.3" stroke-opacity="0.85"/>
<rect x="1191.8" y="339.4" width="13.3" height="13.3" fill="none" stroke="#fff" stroke-width="1.3" stroke-opacity="0.85"/>
<rect x="1183.8" y="422.7" width="13.3" height="13.3" fill="none" stroke="#fff" stroke-width="1.3" stroke-opacity="0.85"/>
<rect x="1194.4" y="178.8" width="13.3" height="13.3" fill="none" stroke="#fff" stroke-width="1.3" stroke-opacity="0.85"/>
<rect x="1182.0" y="180.9" width="13.3" height="13.3" fill="none" stroke="#fff" stroke-width="1.3" stroke-opacity="0.85"/>
<rect x="1169.7" y="182.9" width="13.3" height="13.3" fill="none" stroke="#fff" stroke-width="1.3" stroke-opacity="0.85"/>
<rect x="1157.6" y="184.9" width="13.3" height="13.3" fill="none" stroke="#fff" stroke-width="1.3" stroke-opacity="0.85"/>
<rect x="1145.6" y="186.9" width="13.3" height="13.3" fill="none" stroke="#fff" stroke-width="1.3" stroke-opacity="0.85"/>
<rect x="1222.9" y="191.9" width="13.3" height="13.3" fill="none" stroke="#fff" stroke-width="1.3" stroke-opacity="0.85"/>
<rect x="1241.5" y="210.3" width="13.3" height="13.3" fill="none" stroke="#fff" stroke-width="1.3" stroke-opacity="0.85"/>
<rect x="1260.5" y="230.3" width="13.3" height="13.3" fill="none" stroke="#fff" stroke-width="1.3" stroke-opacity="0.85"/>
<rect x="1285.3" y="255.3" width="13.3" height="13.3" fill="none" stroke="#fff" stroke-width="1.3" stroke-opacity="0.85"/>
<rect x="1316.9" y="285.7" width="13.3" height="13.3" fill="none" stroke="#fff" stroke-width="1.3" stroke-opacity="0.85"/>
<rect x="1208.4" y="160.2" width="13.3" height="13.3" fill="none" stroke="#fff" stroke-width="1.3" stroke-opacity="0.85"/>
<rect x="1209.8" y="145.5" width="13.3" height="13.3" fill="none" stroke="#fff" stroke-width="1.3" stroke-opacity="0.85"/>
<rect x="1211.1" y="132.3" width="13.3" height="13.3" fill="none" stroke="#fff" stroke-width="1.3" stroke-opacity="0.85"/>
<rect x="1212.2" y="120.4" width="13.3" height="13.3" fill="none" stroke="#fff" stroke-width="1.3" stroke-opacity="0.85"/>
<rect x="1213.2" y="109.5" width="13.3" height="13.3" fill="none" stroke="#fff" stroke-width="1.3" stroke-opacity="0.85"/>
<rect x="1207.3" y="177.1" width="12.5" height="12.5" fill="none" stroke="#000" stroke-width="2" stroke-opacity="1"/>
<circle cx="1185.5" cy="169.3" r="3.7" fill="rgb(121,181,116)" stroke="#000" stroke-width="1.1"/>
<circle cx="1167.9" cy="147.3" r="3.7" fill="rgb(96,181,95)" stroke="#000" stroke-width="1.1"/>
<circle cx="1155.0" cy="128.4" r="3.7" fill="rgb(71,181,73)" stroke="#000" stroke-width="1.1"/>
<circle cx="1144.5" cy="114.4" r="3.7" fill="rgb(45,180,52)" stroke="#000" stroke-width="1.1"/>
<circle cx="1135.4" cy="103.4" r="3.7" fill="rgb(20,180,30)" stroke="#000" stroke-width="1.1"/>
<circle cx="1193.1" cy="199.9" r="4.3" fill="rgb(121,181,173)" stroke="#000" stroke-width="1.1"/>
<circle cx="1182.5" cy="202.4" r="3.7" fill="rgb(96,181,174)" stroke="#000" stroke-width="1.1"/>
<circle cx="1172.1" cy="205.4" r="3.7" fill="rgb(71,181,176)" stroke="#000" stroke-width="1.1"/>
<circle cx="1162.6" cy="207.3" r="3.7" fill="rgb(45,180,178)" stroke="#000" stroke-width="1.1"/>
<circle cx="1154.7" cy="209.5" r="3.7" fill="rgb(20,180,180)" stroke="#000" stroke-width="1.1"/>
<circle cx="1256.3" cy="185.4" r="3.7" fill="rgb(189,132,124)" stroke="#000" stroke-width="1.1"/>
<circle cx="1322.3" cy="169.4" r="3.7" fill="rgb(192,112,105)" stroke="#000" stroke-width="1.1"/>
<circle cx="1374.4" cy="156.3" r="3.7" fill="rgb(194,91,87)" stroke="#000" stroke-width="1.1"/>
<circle cx="1420.4" cy="146.0" r="3.7" fill="rgb(197,71,68)" stroke="#000" stroke-width="1.1"/>
<circle cx="1461.3" cy="136.7" r="3.7" fill="rgb(200,50,50)" stroke="#000" stroke-width="1.1"/>
<circle cx="1203.5" cy="234.3" r="3.7" fill="rgb(129,129,169)" stroke="#000" stroke-width="1.1"/>
<circle cx="1202.5" cy="265.5" r="3.7" fill="rgb(106,106,169)" stroke="#000" stroke-width="1.1"/>
<circle cx="1201.0" cy="302.6" r="3.7" fill="rgb(84,84,169)" stroke="#000" stroke-width="1.1"/>
<circle cx="1199.1" cy="352.6" r="3.7" fill="rgb(62,62,170)" stroke="#000" stroke-width="1.1"/>
<circle cx="1197.0" cy="427.5" r="3.7" fill="rgb(40,40,170)" stroke="#000" stroke-width="1.1"/>
<circle cx="1222.0" cy="219.3" r="3.7" fill="rgb(185,129,169)" stroke="#000" stroke-width="1.1"/>
<circle cx="1239.4" cy="243.2" r="3.7" fill="rgb(186,106,169)" stroke="#000" stroke-width="1.1"/>
<circle cx="1256.5" cy="264.5" r="3.7" fill="rgb(188,84,169)" stroke="#000" stroke-width="1.1"/>
<circle cx="1275.9" cy="290.3" r="3.7" fill="rgb(189,62,170)" stroke="#000" stroke-width="1.1"/>
<circle cx="1295.5" cy="318.4" r="3.7" fill="rgb(190,40,170)" stroke="#000" stroke-width="1.1"/>
<circle cx="1207.0" cy="175.2" r="3.7" fill="rgb(189,185,112)" stroke="#000" stroke-width="1.1"/>
<circle cx="1208.4" cy="155.3" r="3.7" fill="rgb(192,186,89)" stroke="#000" stroke-width="1.1"/>
<circle cx="1209.1" cy="137.8" r="3.7" fill="rgb(194,188,66)" stroke="#000" stroke-width="1.1"/>
<circle cx="1210.6" cy="124.4" r="3.7" fill="rgb(197,189,43)" stroke="#000" stroke-width="1.1"/>
<circle cx="1212.0" cy="111.3" r="3.7" fill="rgb(200,190,20)" stroke="#000" stroke-width="1.1"/>
<circle cx="1206.5" cy="194.6" r="3.8" fill="#fff" stroke="#000" stroke-width="1.1"/>
<rect x="0" y="826.7" width="1651" height="71.29999999999995" fill="url(#g48)"/>
<rect x="0" y="825.5" width="1651" height="1.4" fill="#2a2a2a"/>
<path d="M0,826.7 H50 Q54.2,826.7 54.2,830.7 V900H0Z" fill="url(#g49)"/>
<circle cx="26.2" cy="838" r="9.5" fill="url(#g50)"/>
<path d="M20.7,841h11l-5.5,-6z" fill="#222"/>
<rect x="5" y="859.5" width="43" height="45" rx="4" fill="#ffff00" stroke="#a8a800" stroke-width="1.4"/>
<path d="M62.0,900V830.7Q62.0,826.7 66.0,826.7H245.5Q249.5,826.7 249.5,830.7V900Z" fill="url(#g51)"/>
<rect x="69.0" y="833" width="174" height="45" rx="4" fill="rgb(192,192,164)" stroke="rgb(157,157,134)" stroke-width="1.2"/>
<text x="156.0" y="896.5" font-size="12" text-anchor="middle" font-weight="bold" fill="#1c1c1c">20%</text>
<path d="M252.0,900V830.7Q252.0,826.7 256.0,826.7H435.5Q439.5,826.7 439.5,830.7V900Z" fill="url(#g51)"/>
<rect x="259.0" y="833" width="174" height="45" rx="4" fill="rgb(192,192,132)" stroke="rgb(157,157,108)" stroke-width="1.2"/>
<text x="346.0" y="896.5" font-size="12" text-anchor="middle" font-weight="bold" fill="#1c1c1c">40%</text>
<path d="M442.0,900V830.7Q442.0,826.7 446.0,826.7H625.5Q629.5,826.7 629.5,830.7V900Z" fill="url(#g51)"/>
<rect x="449.0" y="833" width="174" height="45" rx="4" fill="rgb(192,192,104)" stroke="rgb(157,157,85)" stroke-width="1.2"/>
<text x="536.0" y="896.5" font-size="12" text-anchor="middle" font-weight="bold" fill="#1c1c1c">60%</text>
<path d="M632.0,900V830.7Q632.0,826.7 636.0,826.7H815.5Q819.5,826.7 819.5,830.7V900Z" fill="url(#g51)"/>
<rect x="639.0" y="833" width="174" height="45" rx="4" fill="rgb(194,194,72)" stroke="rgb(159,159,59)" stroke-width="1.2"/>
<text x="726.0" y="896.5" font-size="12" text-anchor="middle" font-weight="bold" fill="#1c1c1c">80%</text>
<path d="M822.5,900V830.7Q822.5,826.7 826.5,826.7H1005.0Q1009.0,826.7 1009.0,830.7V900Z" fill="url(#g52)"/>
<rect x="829.0" y="833" width="174" height="45" rx="4" fill="rgb(196,196,0)" stroke="rgb(161,161,0)" stroke-width="1.2"/>
<text x="916.0" y="896.5" font-size="12" text-anchor="middle" font-weight="bold" fill="#fff">100%</text>
<path d="M1263.6,900V830.7Q1263.6,826.7 1267.6,826.7H1319Q1323,826.7 1323,830.7V900Z" fill="url(#g54)"/>
<line x1="1263.6" y1="848.8" x2="1323" y2="848.8" stroke="#5a5a5a" stroke-width="1.2"/>
<circle cx="1293.3" cy="837.5" r="9.5" fill="url(#g50)"/>
<path d="M1287.8,840.5h11l-5.5,-6z" fill="#222"/>
<rect x="1274.5" y="858" width="37.5" height="37" rx="5" fill="url(#g55)" stroke="#1e1e1e" stroke-width="2.2"/>
<rect x="1284.4" y="868" width="17.8" height="17.3" fill="#000"/>
<rect x="1324.3" y="826.7" width="57.70000000000009" height="37.299999999999955" fill="url(#g56)"/>
<circle cx="1353.15" cy="844.5" r="12" fill="url(#g57)"/>
<rect x="1348.65" y="840" width="9" height="9" fill="#333"/>
<rect x="1383.2" y="826.7" width="54.899999999999906" height="37.299999999999955" fill="url(#g56)"/>
<circle cx="1410.65" cy="844.5" r="12" fill="url(#g58)"/>
<path d="M1407.15,838.5v12l10,-6z" fill="#333"/>
<rect x="1439.3" y="826.7" width="54.900000000000134" height="37.299999999999955" fill="url(#g56)"/>
<circle cx="1466.75" cy="844.5" r="12" fill="url(#g59)"/>
<path d="M1462.75,838.5h-3v12h3M1470.75,838.5h3v12h-3" fill="none" stroke="#333" stroke-width="2"/><path d="M1463.15,844.5l2.5,-2v4zM1470.35,844.5l-2.5,-2v4z" fill="#333"/>
<rect x="1495.4" y="826.7" width="55.59999999999995" height="37.299999999999955" fill="url(#g56)"/>
<circle cx="1523.2000000000003" cy="844.5" r="12" fill="url(#g60)"/>
<text x="1523.2000000000003" y="851.5" font-size="23" text-anchor="middle" font-weight="bold" fill="#333">∞</text>
<rect x="1552.2" y="826.7" width="54.399999999999906" height="37.299999999999955" fill="url(#g56)"/>
<circle cx="1579.4" cy="844.5" r="12" fill="url(#g61)"/>
<path d="M1573.9,843a5.5,5.5 0 0 1 10,-2.5M1584.9,846a5.5,5.5 0 0 1 -10,2.5" fill="none" stroke="#333" stroke-width="2.2"/><path d="M1585.9,836.5v5h-5zM1572.9,852.5v-5h5z" fill="#333"/>
<rect x="1608.5" y="826.7" width="50" height="37.799999999999955" fill="url(#g62)"/>
<circle cx="1635.5" cy="845" r="12" fill="url(#g63)"/>
<rect x="1324" y="865.5" width="170.3" height="40" fill="url(#g64)"/>
<rect x="1496" y="865.5" width="160" height="40" fill="url(#g64)"/>
<circle cx="1363.3" cy="884.4" r="12" fill="url(#g65)"/>
<circle cx="1630" cy="884.4" r="12" fill="url(#g66)"/>
<text x="1363.3" y="890.5" font-size="19" text-anchor="middle" font-weight="bold" fill="#3c3c3c">«</text>
<text x="1630" y="890.5" font-size="19" text-anchor="middle" font-weight="bold" fill="#3c3c3c">»</text>
<text x="1396.5" y="893.5" font-size="27.5" textLength="63" lengthAdjust="spacingAndGlyphs" fill="#404040" stroke="#404040" stroke-width=".6">Back</text>
<text x="1530" y="893.5" font-size="27.5" textLength="63.5" lengthAdjust="spacingAndGlyphs" fill="#404040" stroke="#404040" stroke-width=".6">Next</text>
</svg>
<div id="ins">
<i style="background:linear-gradient(90deg,#a9ff00 0%,#d3ff00 39.7%,#ff0 78.9%,#ffe800 100%)"></i>
<i style="background:linear-gradient(90deg,#af0 0%,#d3ff00 39.2%,#ff0 77.5%,#ffe700 100%)"></i>
<i style="background:linear-gradient(90deg,#abff00 0%,#d4ff00 38.7%,#ff0 76%,#ffe500 100%)"></i>
<i style="background:linear-gradient(90deg,#acff00 0%,#ff0 75%,#ffe400 100%)"></i>
<i style="background:linear-gradient(90deg,#aeff00 0%,#ff0 73.5%,#ffe200 100%)"></i>
<i style="background:linear-gradient(90deg,#afff01 0%,#ff0 72.1%,#ffe100 100%)"></i>
<i style="background:linear-gradient(90deg,#b0ff01 0%,#ff0 71.1%,#ffe000 100%)"></i>
<i style="background:linear-gradient(90deg,#b1ff02 0%,#baff00 8.3%,#ff0 69.6%,#ffde00 100%)"></i>
<i style="background:linear-gradient(90deg,#b2ff03 0%,#beff00 11.3%,#ff0 68.1%,#fd0 100%)"></i>
<i style="background:linear-gradient(90deg,#b3ff03 0%,#c2ff00 13.7%,#ff0 67.2%,#ffdc00 100%)"></i>
<i style="background:linear-gradient(90deg,#b5ff04 0%,#c7ff00 16.7%,#ff0 65.7%,#ffda00 100%)"></i>
<i style="background:linear-gradient(90deg,#b6ff05 0%,#cbff00 19.1%,#ff0 64.2%,#ffd900 100%)"></i>
<i style="background:linear-gradient(90deg,#b7ff05 0%,#cfff00 22.1%,#ff0 63.2%,#ffd800 100%)"></i>
<i style="background:linear-gradient(90deg,#b8ff06 0%,#d4ff00 25%,#ff0 61.8%,#ffd600 100%)"></i>
<i style="background:linear-gradient(90deg,#b9ff07 0%,#d8ff00 27.5%,#ff0 60.3%,#ffd500 100%)"></i>
<i style="background:linear-gradient(90deg,#bbff07 0%,#df0 30.4%,#ff0 59.3%,#ffe900 78.9%,#ffd400 100%)"></i>
<i style="background:linear-gradient(90deg,#bcff08 0%,#e1ff00 32.8%,#ff0 57.8%,#ffe800 78.4%,#ffd300 100%)"></i>
<i style="background:linear-gradient(90deg,#bdff09 0%,#e6ff00 35.8%,#ff0 56.4%,#ffe600 78.4%,#ffd100 100%)"></i>
<i style="background:linear-gradient(90deg,#bfff09 0%,#eaff00 38.2%,#ff0 55.4%,#ffe600 77%,#ffd000 100%)"></i>
<i style="background:linear-gradient(90deg,#c0ff0a 0%,#efff00 40.7%,#ff0 53.9%,#ffe500 76.5%,#ffcf00 100%)"></i>
<i style="background:linear-gradient(90deg,#c1ff0b 0%,#f4ff00 43.6%,#ff0 52.5%,#ffe400 76%,#ffcd00 100%)"></i>
<i style="background:linear-gradient(90deg,#c2ff0c 0%,#ff0 51.5%,#ffe500 74.5%,#fc0 100%)"></i>
<i style="background:linear-gradient(90deg,#c4ff0c 0%,#ff0 50%,#ffe400 74%,#ffcb00 100%)"></i>
<i style="background:linear-gradient(90deg,#c5ff0d 0%,#ffff01 49%,#ffe300 73.5%,#ffca00 100%)"></i>
<i style="background:linear-gradient(90deg,#c6ff0e 0%,#ffff02 47.5%,#ffe200 72.5%,#ffc800 100%)"></i>
<i style="background:linear-gradient(90deg,#c8ff0e 0%,#ffff03 46.1%,#fff200 57.4%,#ffe100 72.1%,#ffc700 100%)"></i>
<i style="background:linear-gradient(90deg,#c9ff0f 0%,#ffff04 45.1%,#ffed00 60.3%,#ffc600 100%)"></i>
<i style="background:linear-gradient(90deg,#caff10 0%,#ffff05 43.6%,#ffe800 62.7%,#ffc500 100%)"></i>
<i style="background:linear-gradient(90deg,#cf1 0%,#ffff06 42.2%,#ffe400 65.7%,#ffc300 100%)"></i>
<i style="background:linear-gradient(90deg,#cdff12 0%,#ffff07 41.2%,#ffe000 68.1%,#ffc200 100%)"></i>
<i style="background:linear-gradient(90deg,#cfff12 0%,#ffff08 39.7%,#ffdb00 71.1%,#ffc100 100%)"></i>
<i style="background:linear-gradient(90deg,#d0ff13 0%,#ffff0a 38.2%,#ffd700 73.5%,#ffc000 100%)"></i>
<i style="background:linear-gradient(90deg,#d1ff14 0%,#ffff0b 37.3%,#ffe805 56.4%,#ffd300 76.5%,#ffbe00 100%)"></i>
<i style="background:linear-gradient(90deg,#d3ff15 0%,#ffff0c 35.8%,#ffe606 56.4%,#ffd000 78.9%,#ffbd00 100%)"></i>
<i style="background:linear-gradient(90deg,#d4ff15 0%,#ffff0d 34.3%,#ffdc04 65.2%,#fc0 81.9%,#ffbc00 100%)"></i>
<i style="background:linear-gradient(90deg,#d6ff16 0%,#ffff0e 33.3%,#ffdb05 64.7%,#ffc800 84.8%,#fb0 100%)"></i>
<i style="background:linear-gradient(90deg,#d7ff17 0%,#ffff0f 31.9%,#ffda06 63.7%,#ffc400 87.3%,#ffba00 100%)"></i>
<i style="background:linear-gradient(90deg,#d9ff18 0%,#ffff10 30.4%,#ffd906 63.2%,#ffc100 89.7%,#ffb800 100%)"></i>
<i style="background:linear-gradient(90deg,#daff19 0%,#ff1 29.4%,#ffd807 62.7%,#ffb700 100%)"></i>
<i style="background:linear-gradient(90deg,#dcff1a 0%,#ffff13 27.9%,#ffd808 61.8%,#ffb600 100%)"></i>
<i style="background:linear-gradient(90deg,#ddff1a 0%,#ffff14 26.5%,#ffd809 60.8%,#ffb500 100%)"></i>
<i style="background:linear-gradient(90deg,#dfff1b 0%,#ffff15 25.5%,#ffd70a 60.3%,#ffb400 100%)"></i>
<i style="background:linear-gradient(90deg,#e0ff1c 0%,#ffff16 24%,#ffd60b 59.3%,#ffb201 100%)"></i>
<i style="background:linear-gradient(90deg,#e2ff1d 0%,#ffff17 22.5%,#ffd50c 58.8%,#ffb101 100%)"></i>
<i style="background:linear-gradient(90deg,#e3ff1e 0%,#ffff18 21.6%,#ffd50c 57.8%,#ffb002 100%)"></i>
<i style="background:linear-gradient(90deg,#e5ff1f 0%,#ffff1a 20.1%,#ffe813 38.2%,#ffd40d 57.4%,#ffaf03 100%)"></i>
</div>
<svg id="ov2" style="position:absolute;left:0;top:0" width="1651" height="897" viewBox="0 0 1651 897">
<rect x="1416" y="407" width="208" height="141" fill="none" stroke="#1c1c1c" stroke-width="2"/>
<path d="M1418,409L1418,422.3L1622,532.4L1622,409Z" fill="#000" fill-opacity="0.4"/>
<rect x="1417.5" y="408.5" width="205" height="138" fill="none" stroke="#8c8c8c" stroke-width="1.4"/>
<rect x="1512.7" y="470.1" width="13.5" height="13.5" fill="none" stroke="#fff" stroke-width="1.3" stroke-opacity="0.9"/>
<clipPath id="insclip"><rect x="1417" y="408" width="206" height="139"/></clipPath>
<g clip-path="url(#insclip)">
<circle cx="1512.2" cy="420.6" r="3.9" fill="#c8b814" stroke="#000" stroke-width="1.1"/>
<circle cx="1416.1" cy="531.0" r="3.9" fill="#c4bc3c" stroke="#000" stroke-width="1.1"/>
</g>
</svg>
</div></body></html>
